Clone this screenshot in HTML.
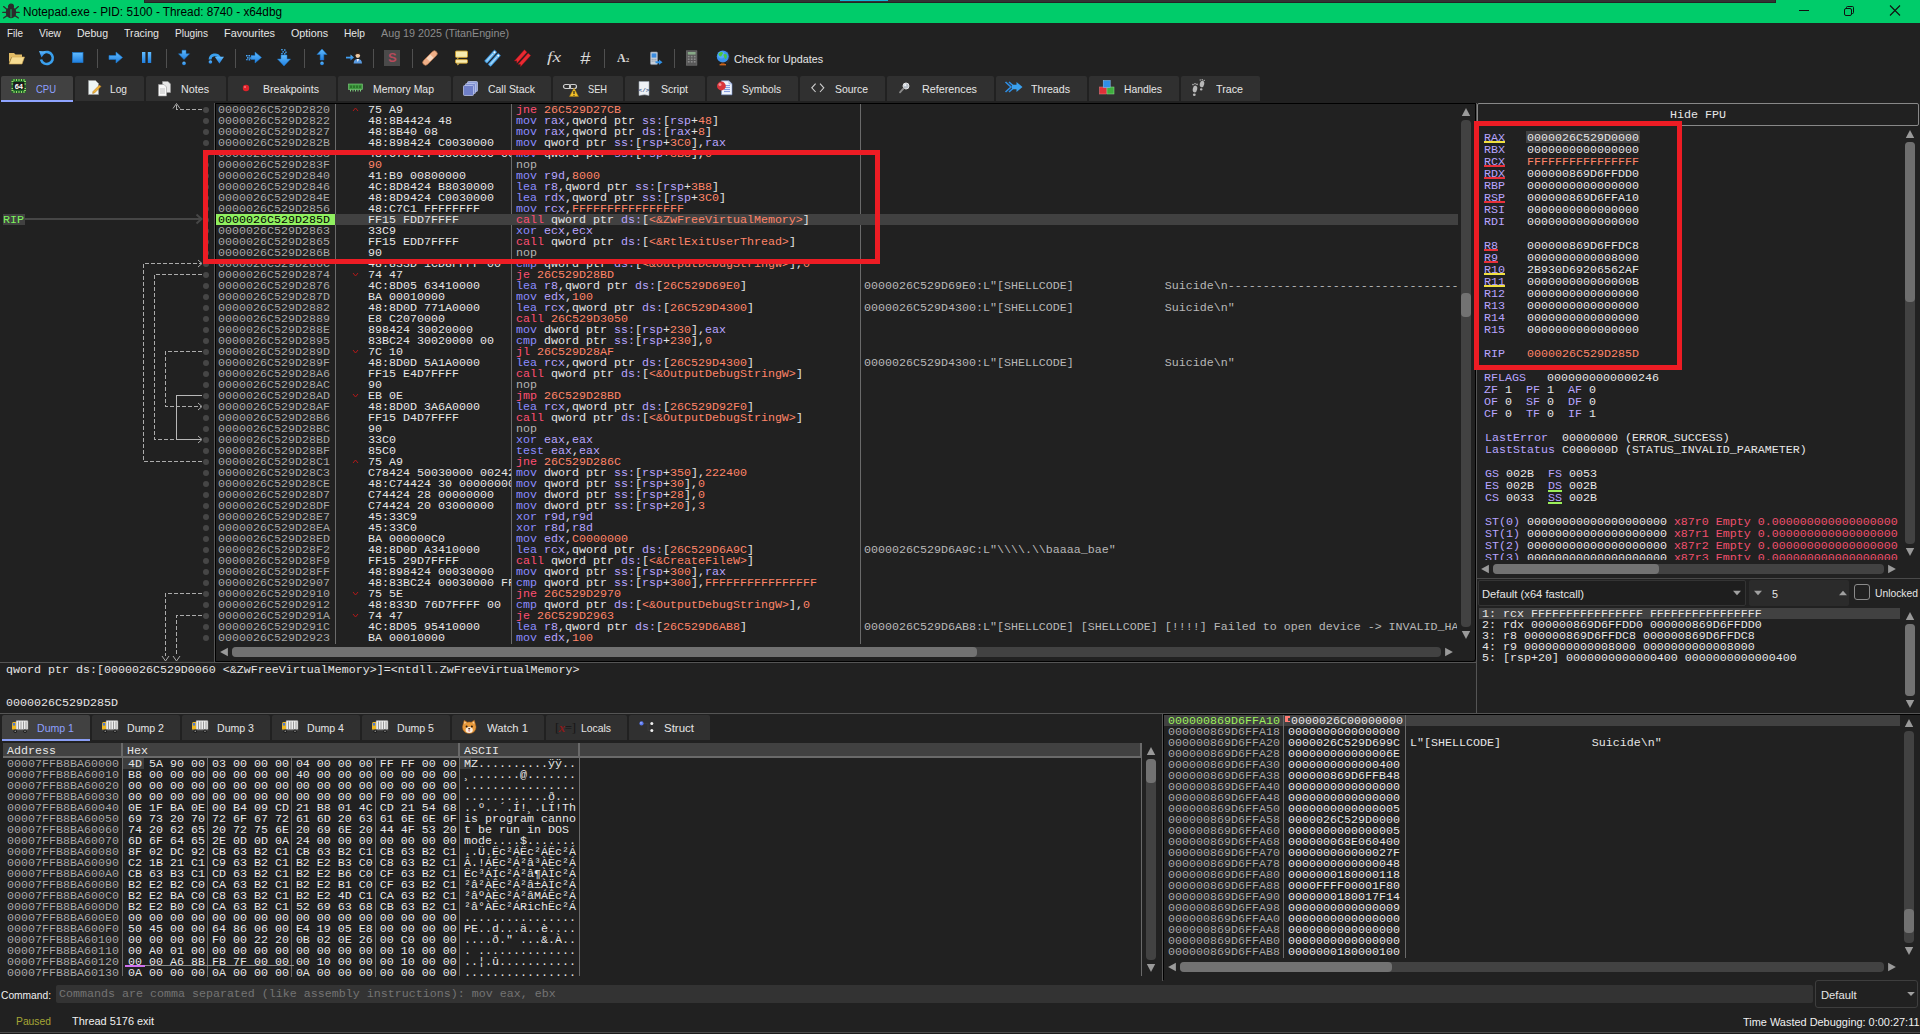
<!DOCTYPE html><html><head><meta charset="utf-8"><title>x64dbg</title><style>html,body{margin:0;padding:0;background:#212121;width:1920px;height:1034px;overflow:hidden}
.b{position:absolute}
.u{position:absolute;font-family:"Liberation Sans",sans-serif;white-space:pre;line-height:16px;height:16px}
.m{position:absolute;font-family:"Liberation Mono",monospace;font-size:11.664px;white-space:pre}
</style></head><body>
<svg width="0" height="0" style="position:absolute"><defs><linearGradient id="gb" x1="0" y1="0" x2="0" y2="1"><stop offset="0" stop-color="#62bcff"/><stop offset="1" stop-color="#1f7fe0"/></linearGradient></defs></svg>
<div class="b" style="left:0px;top:0px;width:1920px;height:23px;background:#00cc6a;"></div>
<div class="b" style="left:144px;top:0px;width:1632px;height:3px;background:#242424;"></div>
<div class="b" style="left:145px;top:0px;width:1630px;height:2px;background:#333333;"></div>
<div class="b" style="left:840px;top:0px;width:48px;height:1px;background:#10b8d8;"></div>
<svg class="b" style="left:2px;top:3px;" width="18" height="16" viewBox="0 0 18 16"><g fill="#2b2b2b" stroke="#2b2b2b" stroke-width="1.3" stroke-linecap="round">
<ellipse cx="9" cy="9.6" rx="4.6" ry="5" /><circle cx="9" cy="3.6" r="2.4"/>
<path d="M5 6.4 L1.6 3.6 M13 6.4 L16.4 3.6 M4.6 9.4 L.8 9.4 M13.4 9.4 L17.2 9.4 M5 12.6 L1.6 15 M13 12.6 L16.4 15" fill="none"/></g><path d="M9 6.2V14.4" stroke="#00cc6a" stroke-width=".9"/></svg>
<div class="u" style="left:23px;top:4px;color:#000;font-size:12px;transform:scaleX(0.9813);transform-origin:0 50%;">Notepad.exe - PID: 5100 - Thread: 8740 - x64dbg</div>
<svg class="b" style="left:1795px;top:4px;" width="20" height="14" viewBox="0 0 20 14"><path d="M4 6.5 H14" stroke="#111" stroke-width="1"/></svg>
<svg class="b" style="left:1840px;top:3px;" width="20" height="16" viewBox="0 0 20 16"><rect x="4.5" y="5.5" width="7" height="7" rx="1.5" fill="none" stroke="#111" stroke-width="1"/><path d="M6.5 5.5 V4.5 Q6.5 3.5 7.5 3.5 H12.5 Q13.5 3.5 13.5 4.5 V9.5 Q13.5 10.5 12.5 10.5 H11.5" fill="none" stroke="#111" stroke-width="1"/></svg>
<svg class="b" style="left:1885px;top:3px;" width="20" height="16" viewBox="0 0 20 16"><path d="M5 2.5 L15 12.5 M15 2.5 L5 12.5" stroke="#111" stroke-width="1.1"/></svg>
<div class="u" style="left:7px;top:25px;color:#e6e6e6;font-size:11px;transform:scaleX(0.9027);transform-origin:0 50%;">File</div>
<div class="u" style="left:39px;top:25px;color:#e6e6e6;font-size:11px;transform:scaleX(0.9305);transform-origin:0 50%;">View</div>
<div class="u" style="left:77px;top:25px;color:#e6e6e6;font-size:11px;transform:scaleX(0.9564);transform-origin:0 50%;">Debug</div>
<div class="u" style="left:124px;top:25px;color:#e6e6e6;font-size:11px;transform:scaleX(0.9650);transform-origin:0 50%;">Tracing</div>
<div class="u" style="left:175px;top:25px;color:#e6e6e6;font-size:11px;transform:scaleX(0.9147);transform-origin:0 50%;">Plugins</div>
<div class="u" style="left:224px;top:25px;color:#e6e6e6;font-size:11px;transform:scaleX(0.9931);transform-origin:0 50%;">Favourites</div>
<div class="u" style="left:291px;top:25px;color:#e6e6e6;font-size:11px;transform:scaleX(0.9760);transform-origin:0 50%;">Options</div>
<div class="u" style="left:344px;top:25px;color:#e6e6e6;font-size:11px;transform:scaleX(0.9283);transform-origin:0 50%;">Help</div>
<div class="u" style="left:381px;top:25px;color:#8c8c8c;font-size:11px;transform:scaleX(0.9766);transform-origin:0 50%;">Aug 19 2025 (TitanEngine)</div>
<div class="b" style="left:97px;top:49px;width:1px;height:19px;background:#505050;"></div>
<div class="b" style="left:166px;top:49px;width:1px;height:19px;background:#505050;"></div>
<div class="b" style="left:235px;top:49px;width:1px;height:19px;background:#505050;"></div>
<div class="b" style="left:304px;top:49px;width:1px;height:19px;background:#505050;"></div>
<div class="b" style="left:373px;top:49px;width:1px;height:19px;background:#505050;"></div>
<div class="b" style="left:412px;top:49px;width:1px;height:19px;background:#505050;"></div>
<div class="b" style="left:604px;top:49px;width:1px;height:19px;background:#505050;"></div>
<div class="b" style="left:674px;top:49px;width:1px;height:19px;background:#505050;"></div>
<svg class="b" style="left:7px;top:49px;" width="20" height="18" viewBox="0 0 20 18"><path d="M2 4 H7 L8.5 5.5 H15 V8 H4.5 L2 14 Z" fill="#e2bc66"/><path d="M4.8 8 H17.5 L15 15 H2.2 Z" fill="#f6dc92" stroke="#d4aa50" stroke-width=".6"/></svg>
<svg class="b" style="left:37px;top:48px;" width="20" height="20" viewBox="0 0 20 20"><path d="M6.2 5.2 A6 6 0 1 1 4 11.5" fill="none" stroke="#3aa0ee" stroke-width="2.6"/><path d="M2 3 L9 3.5 L4.5 9.5 Z" fill="url(#gb)"/></svg>
<svg class="b" style="left:69px;top:49px;" width="18" height="18" viewBox="0 0 18 18"><rect x="3.5" y="3.5" width="10.5" height="10" fill="url(#gb)" stroke="#1a78d0" stroke-width=".7"/></svg>
<svg class="b" style="left:107px;top:49px;" width="18" height="18" viewBox="0 0 18 18"><path d="M2 6.5 H9 V3 L15.5 8.5 L9 14 V10.5 H2 Z" fill="url(#gb)" stroke="#1a78d0" stroke-width=".6"/></svg>
<svg class="b" style="left:139px;top:49px;" width="16" height="18" viewBox="0 0 16 18"><rect x="3" y="3" width="3.4" height="11" fill="url(#gb)"/><rect x="8.8" y="3" width="3.4" height="11" fill="url(#gb)"/></svg>
<svg class="b" style="left:176px;top:47px;" width="16" height="22" viewBox="0 0 16 22"><path d="M6 3.2 H10 V6.8 H13.5 L8 12.6 L2.5 6.8 H6 Z" fill="url(#gb)" stroke="#1a78d0" stroke-width=".5"/><circle cx="8" cy="16.4" r="1.8" fill="url(#gb)"/></svg>
<svg class="b" style="left:205px;top:48px;" width="20" height="20" viewBox="0 0 20 20"><path d="M5 11.5 A5 5 0 0 1 14.4 9.5" fill="none" stroke="#3aa0ee" stroke-width="2.8"/><path d="M9.8 8.8 H19 L14.4 15.4 Z" fill="url(#gb)"/><circle cx="5.4" cy="14" r="1.8" fill="url(#gb)"/></svg>
<svg class="b" style="left:244px;top:49px;" width="20" height="18" viewBox="0 0 20 18"><path d="M7 6.5 H11 V3 L17.5 8.5 L11 14 V10.5 H7 Z" fill="url(#gb)" stroke="#1a78d0" stroke-width=".5"/><g fill="url(#gb)"><rect x="2" y="6" width="1.6" height="1.6"/><rect x="4.4" y="6" width="1.6" height="1.6"/><rect x="3" y="8.2" width="1.6" height="1.6"/><rect x="5.2" y="8.4" width="1.6" height="1.6"/><rect x="2.2" y="10" width="1.4" height="1.4"/><rect x="4.6" y="10.2" width="1.6" height="1.4"/></g></svg>
<svg class="b" style="left:275px;top:47px;" width="18" height="22" viewBox="0 0 18 22"><path d="M6 8 H12 V12 H15.5 L9 19 L2.5 12 H6 Z" fill="url(#gb)" stroke="#1a78d0" stroke-width=".5"/><g fill="url(#gb)"><rect x="6.2" y="2" width="1.5" height="1.5"/><rect x="9" y="2.4" width="1.5" height="1.5"/><rect x="7.4" y="4.2" width="1.5" height="1.5"/><rect x="10.2" y="4.6" width="1.5" height="1.5"/><rect x="6.2" y="6" width="1.5" height="1.5"/><rect x="9" y="6.2" width="1.5" height="1.5"/></g></svg>
<svg class="b" style="left:314px;top:47px;" width="16" height="22" viewBox="0 0 16 22"><path d="M8 2 L13 7.5 H9.8 V13 H6.2 V7.5 H3 Z" fill="url(#gb)" stroke="#1a78d0" stroke-width=".5"/><circle cx="8" cy="16.4" r="1.8" fill="url(#gb)"/></svg>
<svg class="b" style="left:344px;top:49px;" width="20" height="18" viewBox="0 0 20 18"><path d="M2 7.8 H6.5 V5.6 L10 8.6 L6.5 11.6 V9.4 H2 Z" fill="url(#gb)"/><circle cx="13.8" cy="6.6" r="2.3" fill="#ecc9a4"/><path d="M11.4 6 Q11.6 3.4 13.8 3.4 Q16 3.4 16.2 6 Q15 4.8 13.8 5 Q12.6 4.8 11.4 6Z" fill="#3a2414"/><path d="M9.6 14.4 Q9.8 10 13.8 10 Q17.8 10 18 14.4 Z" fill="#5a9ae0"/><path d="M12.6 10 L13.8 13 L15 10Z" fill="#fff"/></svg>
<div class="b" style="left:384px;top:50px;width:16px;height:16px;background:#4a4a4a;"></div>
<div class="b" style="left:387px;top:49px;font:bold 13px 'Liberation Sans',sans-serif;color:#b84a5c;line-height:16px;left:388px;top:50px">S</div>
<svg class="b" style="left:420px;top:48px;" width="20" height="20" viewBox="0 0 20 20"><g transform="rotate(-45 10 10)"><rect x="1" y="7.2" width="18" height="5.6" rx="2.8" fill="#f0b088" stroke="#b87850" stroke-width=".7"/><rect x="7.4" y="7.6" width="5.2" height="4.8" fill="#f8d8c0"/></g></svg>
<svg class="b" style="left:453px;top:48px;" width="18" height="20" viewBox="0 0 18 20"><rect x="2.5" y="3" width="12" height="6.4" rx="1" fill="#f8ecb0" stroke="#c89a28" stroke-width=".9"/><rect x="2.5" y="11.6" width="12" height="3.6" rx="1" fill="#f8ecb0" stroke="#c89a28" stroke-width=".9"/><path d="M4 15.4 L4.6 17.6 L6.6 15.4Z" fill="#e8c860"/><path d="M4 9.6 L4.6 11.2 L6.2 9.6Z" fill="#e8c860"/></svg>
<svg class="b" style="left:483px;top:48px;" width="20" height="20" viewBox="0 0 20 20"><g transform="rotate(-48 10 10)"><rect x="2" y="5.6" width="15" height="3.4" rx=".8" fill="#6cbcf2" stroke="#2a7cc8" stroke-width=".6"/><rect x="2" y="10.6" width="15" height="3.4" rx=".8" fill="#6cbcf2" stroke="#2a7cc8" stroke-width=".6"/><circle cx="15.2" cy="7.3" r=".9" fill="#fff"/><circle cx="15.2" cy="12.3" r=".9" fill="#fff"/><path d="M4 7.3H13M4 12.3H13" stroke="#d8efff" stroke-width=".7"/></g></svg>
<svg class="b" style="left:513px;top:48px;" width="20" height="20" viewBox="0 0 20 20"><g transform="rotate(-48 10 10)"><path d="M2 5.6 H17 V9 H2 L3.8 7.3 Z" fill="#ea2a32" stroke="#b01018" stroke-width=".4"/><path d="M2 10.6 H17 V14 H2 L3.8 12.3 Z" fill="#ea2a32" stroke="#b01018" stroke-width=".4"/></g></svg>
<div class="b" style="left:547px;top:47px;font:italic 15px 'Liberation Serif',serif;color:#d4d4d4;line-height:20px;transform:scaleX(1.3);transform-origin:0 0">fx</div>
<div class="b" style="left:579.5px;top:49px;font:italic 16px 'Liberation Sans',sans-serif;color:#dcdcdc;line-height:20px;transform:scaleX(1.15);transform-origin:0 0">#</div>
<div class="b" style="left:617px;top:50px;font:bold 12px 'Liberation Serif',serif;color:#d8d8d8;line-height:16px;">A<span style="font-size:7px;position:relative;top:0px">2</span></div>
<svg class="b" style="left:647px;top:49px;" width="18" height="18" viewBox="0 0 18 18"><rect x="3.5" y="3" width="7" height="12.6" rx="1" fill="#c8d0da" stroke="#8894a4" stroke-width=".6"/><rect x="4.6" y="4.4" width="4.8" height="4.2" fill="#3a8ce0"/><g fill="#8a96a6"><rect x="4.6" y="9.8" width="1.2" height="1"/><rect x="6.4" y="9.8" width="1.2" height="1"/><rect x="8.2" y="9.8" width="1.2" height="1"/><rect x="4.6" y="11.6" width="1.2" height="1"/><rect x="6.4" y="11.6" width="1.2" height="1"/><rect x="8.2" y="11.6" width="1.2" height="1"/></g><path d="M8.5 12.2 H12 V10.6 L15.5 13.2 L12 15.8 V14.2 H8.5 Z" fill="#2f8fe6"/></svg>
<svg class="b" style="left:685px;top:49px;" width="14" height="18" viewBox="0 0 14 18"><rect x="1.5" y="1.8" width="10.4" height="14.4" fill="#585858" stroke="#7a7a7a" stroke-width=".6"/><rect x="2.8" y="3" width="7.8" height="2.6" fill="#88aa88"/><g fill="#8c8c8c"><rect x="2.8" y="6.8" width="1.8" height="1.6"/><rect x="5.8" y="6.8" width="1.8" height="1.6"/><rect x="8.8" y="6.8" width="1.8" height="1.6"/><rect x="2.8" y="9.4" width="1.8" height="1.6"/><rect x="5.8" y="9.4" width="1.8" height="1.6"/><rect x="8.8" y="9.4" width="1.8" height="1.6"/><rect x="2.8" y="12" width="1.8" height="1.6"/><rect x="5.8" y="12" width="1.8" height="1.6"/><rect x="8.8" y="12" width="1.8" height="1.6"/></g></svg>
<svg class="b" style="left:714px;top:48px;" width="18" height="20" viewBox="0 0 18 20"><path d="M11.5 2.6 A7.4 7.4 0 0 1 12.5 15" fill="none" stroke="#2a2a30" stroke-width="1.6"/><circle cx="8.8" cy="8.6" r="6" fill="#3a94ee"/><circle cx="7.4" cy="7" r="3.4" fill="#6cb8ff" opacity=".55"/><path d="M4.4 6 Q6 3.4 8.6 4.2 Q9.6 5.6 8 6.8 Q7.8 8.4 6.2 8.4 Q4.8 7.6 4.4 6Z M9.6 6.4 Q11.4 5.4 12.8 7 Q13.4 9.6 11.8 11.2 Q10.4 10.6 10.4 9 Q9.2 7.8 9.6 6.4Z" fill="#4cc83c"/><path d="M5.6 16 H12 V17.4 H5.6Z" fill="#c8641e"/><path d="M7 14.8H10.6V16H7Z" fill="#8a4414"/></svg>
<div class="u" style="left:733.5px;top:51px;color:#e6e6e6;font-size:11px;transform:scaleX(0.9770);transform-origin:0 50%;">Check for Updates</div>
<div class="b" style="left:1px;top:76px;width:72px;height:26px;background:#414141;border-radius:2px 2px 0 0;"></div>
<div class="b" style="left:1px;top:100px;width:72px;height:2px;background:#8fa4ff;"></div>
<div class="u" style="left:36px;top:81px;color:#8ea0ff;font-size:11px;transform:scaleX(0.8612);transform-origin:0 50%;">CPU</div>
<div class="b" style="left:75px;top:76px;width:69px;height:25px;background:#303030;border-radius:2px 2px 0 0;"></div>
<div class="u" style="left:110px;top:81px;color:#e6e6e6;font-size:11px;transform:scaleX(0.9263);transform-origin:0 50%;">Log</div>
<div class="b" style="left:146px;top:76px;width:80px;height:25px;background:#303030;border-radius:2px 2px 0 0;"></div>
<div class="u" style="left:181px;top:81px;color:#e6e6e6;font-size:11px;transform:scaleX(0.9744);transform-origin:0 50%;">Notes</div>
<div class="b" style="left:228px;top:76px;width:108px;height:25px;background:#303030;border-radius:2px 2px 0 0;"></div>
<div class="u" style="left:263px;top:81px;color:#e6e6e6;font-size:11px;transform:scaleX(0.9640);transform-origin:0 50%;">Breakpoints</div>
<div class="b" style="left:338px;top:76px;width:113px;height:25px;background:#303030;border-radius:2px 2px 0 0;"></div>
<div class="u" style="left:373px;top:81px;color:#e6e6e6;font-size:11px;transform:scaleX(0.9505);transform-origin:0 50%;">Memory Map</div>
<div class="b" style="left:453px;top:76px;width:98px;height:25px;background:#303030;border-radius:2px 2px 0 0;"></div>
<div class="u" style="left:488px;top:81px;color:#e6e6e6;font-size:11px;transform:scaleX(0.9492);transform-origin:0 50%;">Call Stack</div>
<div class="b" style="left:553px;top:76px;width:70px;height:25px;background:#303030;border-radius:2px 2px 0 0;"></div>
<div class="u" style="left:588px;top:81px;color:#e6e6e6;font-size:11px;transform:scaleX(0.8401);transform-origin:0 50%;">SEH</div>
<div class="b" style="left:625px;top:76px;width:80px;height:25px;background:#303030;border-radius:2px 2px 0 0;"></div>
<div class="u" style="left:661px;top:81px;color:#e6e6e6;font-size:11px;transform:scaleX(0.9603);transform-origin:0 50%;">Script</div>
<div class="b" style="left:707px;top:76px;width:91px;height:25px;background:#303030;border-radius:2px 2px 0 0;"></div>
<div class="u" style="left:742px;top:81px;color:#e6e6e6;font-size:11px;transform:scaleX(0.9246);transform-origin:0 50%;">Symbols</div>
<div class="b" style="left:800px;top:76px;width:85px;height:25px;background:#303030;border-radius:2px 2px 0 0;"></div>
<div class="u" style="left:835px;top:81px;color:#e6e6e6;font-size:11px;transform:scaleX(0.9468);transform-origin:0 50%;">Source</div>
<div class="b" style="left:887px;top:76px;width:107px;height:25px;background:#303030;border-radius:2px 2px 0 0;"></div>
<div class="u" style="left:922px;top:81px;color:#e6e6e6;font-size:11px;transform:scaleX(0.9778);transform-origin:0 50%;">References</div>
<div class="b" style="left:996px;top:76px;width:91px;height:25px;background:#303030;border-radius:2px 2px 0 0;"></div>
<div class="u" style="left:1031px;top:81px;color:#e6e6e6;font-size:11px;transform:scaleX(0.9665);transform-origin:0 50%;">Threads</div>
<div class="b" style="left:1089px;top:76px;width:90px;height:25px;background:#303030;border-radius:2px 2px 0 0;"></div>
<div class="u" style="left:1124px;top:81px;color:#e6e6e6;font-size:11px;transform:scaleX(0.9416);transform-origin:0 50%;">Handles</div>
<div class="b" style="left:1181px;top:76px;width:79px;height:25px;background:#303030;border-radius:2px 2px 0 0;"></div>
<div class="u" style="left:1216px;top:81px;color:#e6e6e6;font-size:11px;transform:scaleX(0.9744);transform-origin:0 50%;">Trace</div>
<svg class="b" style="left:11px;top:78px;" width="16" height="17" viewBox="0 0 16 17"><rect x=".5" y="1" width="14.5" height="14" rx="1" fill="#1f6a2a"/><g stroke="#9ad86a" stroke-width="1"><path d="M3 1V3M5.5 1V3M8 1V3M10.5 1V3M13 1V3M3 13V15M5.5 13V15M8 13V15M10.5 13V15M13 13V15M.5 3.5H2.5M.5 6H2.5M.5 10.5H2.5M.5 12.5H2.5M13 3.5H15M13 6H15M13 10.5H15M13 12.5H15"/></g><rect x="2.2" y="4" width="11.2" height="7.6" fill="#1a1a1a"/><text x="7.8" y="10.6" font-family="Liberation Sans" font-size="7.5" font-weight="bold" fill="#fff" text-anchor="middle">64</text></svg>
<svg class="b" style="left:86px;top:79px;" width="18" height="18" viewBox="0 0 18 18"><path d="M2.5 1.5 H9.5 L12.5 4.5 V15.5 H2.5 Z" fill="#eef6f6" stroke="#9a9a9a" stroke-width=".6"/><path d="M7 12.5 L13.5 6 L15 7.5 L8.5 14 L6.6 14.4Z" fill="#f0b43a" stroke="#a86e1a" stroke-width=".5"/></svg>
<svg class="b" style="left:156px;top:80px;" width="20" height="18" viewBox="0 0 20 18"><path d="M6.5 1.5 H12 L14.5 4 V12.5 H6.5 Z" fill="#e8e8e8" stroke="#9a9a9a" stroke-width=".6"/><path d="M2.5 4.5 H8 L10.5 7 V16 H2.5 Z" fill="#f8f8f8" stroke="#9a9a9a" stroke-width=".6"/><path d="M4 9H9M4 11H9M4 13H9" stroke="#aaa" stroke-width=".7"/></svg>
<svg class="b" style="left:240px;top:82px;" width="12" height="12" viewBox="0 0 12 12"><circle cx="6" cy="6" r="3.2" fill="#e0222a"/><circle cx="5" cy="5" r="1" fill="#f4777c"/></svg>
<svg class="b" style="left:348px;top:83px;" width="16" height="10" viewBox="0 0 16 10"><rect x="0.5" y="1" width="14" height="5.5" fill="#3f9a3f" stroke="#7fd07f" stroke-width=".6"/><path d="M2.5 6.5V8.5M5 6.5V8.5M7.5 6.5V8.5M10 6.5V8.5M12.5 6.5V8.5" stroke="#7fd07f" stroke-width="1"/><path d="M3 2.5V5M6 2.5V5M9 2.5V5M12 2.5V5" stroke="#1f5f1f" stroke-width="1.2"/></svg>
<svg class="b" style="left:462px;top:80px;" width="18" height="18" viewBox="0 0 18 18"><rect x="5.5" y="1.5" width="10" height="10" rx="1" fill="#8f9fd8" stroke="#c6cef0" stroke-width=".7"/><rect x="3.5" y="3.5" width="10" height="10" rx="1" fill="#7f8fd0" stroke="#c6cef0" stroke-width=".7"/><rect x="1.5" y="5.5" width="10" height="10" rx="1" fill="#6f7fc8" stroke="#c6cef0" stroke-width=".7"/></svg>
<svg class="b" style="left:562px;top:81px;" width="20" height="18" viewBox="0 0 20 18"><rect x="1.5" y="3.5" width="7" height="4" rx="2" fill="none" stroke="#d0d0d0" stroke-width="1.2"/><rect x="7.5" y="3.5" width="7" height="4" rx="2" fill="none" stroke="#d0d0d0" stroke-width="1.2"/><path d="M12 7 L16.5 15.5 H7.5 Z" fill="#f2c02a" stroke="#a07a10" stroke-width=".5"/><path d="M12 10V13" stroke="#222" stroke-width="1.2"/><circle cx="12" cy="14.3" r=".6" fill="#222"/></svg>
<svg class="b" style="left:637px;top:80px;" width="16" height="18" viewBox="0 0 16 18"><path d="M2 1.5 H12 V15.5 Q8 14 2 15.5 Z" fill="#eef2f6" stroke="#9aa4b0" stroke-width=".6"/><text x="7" y="11.5" font-family="Liberation Mono" font-size="6" fill="#3a5a8a" text-anchor="middle" font-weight="bold">&lt;/&gt;</text></svg>
<svg class="b" style="left:716px;top:79px;" width="20" height="18" viewBox="0 0 20 18"><path d="M5.5 1.8 H13 L16 4.8 V15.8 H5.5 Z" fill="#f0f4fc" stroke="#7a94d0" stroke-width=".6"/><path d="M8 6.6H14M8 8.6H14M8 10.6H14M8 12.6H14" stroke="#5a7ad8" stroke-width=".8"/><path d="M13 1.8 V4.8 H16" fill="none" stroke="#7a94d0" stroke-width=".6"/><circle cx="5.4" cy="7" r="4.4" fill="#d8343c"/><circle cx="4" cy="5.4" r="1.5" fill="#f29094"/></svg>
<svg class="b" style="left:810px;top:82px;" width="18" height="14" viewBox="0 0 18 14"><path d="M5.6 1.6 L1.8 5.8 L5.6 10 M10 1.6 L13.8 5.8 L10 10" fill="none" stroke="#d0d0d0" stroke-width="1.1"/></svg>
<svg class="b" style="left:896px;top:81px;" width="18" height="16" viewBox="0 0 18 16"><circle cx="10" cy="5" r="3" fill="#b8c0c8" stroke="#e4e4e4" stroke-width="1"/><circle cx="9.2" cy="4.2" r="1.1" fill="#eef2f6"/><path d="M7.6 7.4 L4 11.4" stroke="#8a8a8a" stroke-width="1.8" stroke-linecap="round"/></svg>
<svg class="b" style="left:1004px;top:80px;" width="20" height="16" viewBox="0 0 20 16"><path d="M1.5 2 L7 7 L1.5 12 M5 2 L10.5 7 L5 12" fill="none" stroke="#2f8fe6" stroke-width="1.6"/><path d="M8 4.8 H12.5 V2 L18.5 7 L12.5 12 V9.2 H8 Z" fill="#3aa0ee"/></svg>
<svg class="b" style="left:1098px;top:79px;" width="18" height="18" viewBox="0 0 18 18"><rect x="1.5" y="8" width="7" height="7" fill="#e03038" stroke="#f07a80" stroke-width=".5"/><rect x="9" y="8" width="7" height="7" fill="#3fae3f" stroke="#8fe08f" stroke-width=".5"/><rect x="5.2" y="1.5" width="7" height="7" fill="#2f8fe6" stroke="#8cc4f4" stroke-width=".5"/></svg>
<svg class="b" style="left:1190px;top:79px;" width="18" height="20" viewBox="0 0 18 20"><ellipse cx="5" cy="10" rx="2.2" ry="3.4" fill="#b8b8b8" transform="rotate(12 5 10)"/><ellipse cx="4.3" cy="15.8" rx="1.4" ry="1.2" fill="#b8b8b8"/><ellipse cx="12" cy="5" rx="2.2" ry="3.2" fill="#b8b8b8" transform="rotate(12 12 5)"/><ellipse cx="11.2" cy="10.4" rx="1.3" ry="1.1" fill="#b8b8b8"/><circle cx="3" cy="5.6" r=".8" fill="#b8b8b8"/><circle cx="5" cy="4.8" r=".8" fill="#b8b8b8"/><circle cx="7" cy="5.4" r=".8" fill="#b8b8b8"/><circle cx="10.2" cy="1" r=".7" fill="#b8b8b8"/><circle cx="12.2" cy=".7" r=".7" fill="#b8b8b8"/><circle cx="14.2" cy="1.4" r=".7" fill="#b8b8b8"/></svg>
<div class="b" style="left:214px;top:103px;width:1px;height:560px;background:#555;"></div>
<div class="b" style="left:0px;top:662px;width:1477px;height:1px;background:#555;"></div>
<div class="b" style="left:1476px;top:103px;width:1px;height:610px;background:#555;"></div>
<div class="b" style="left:215px;top:103px;width:1261px;height:559px;border:1px solid #000;border-radius:0 0 3px 0;box-sizing:border-box"></div>
<div class="b" style="left:335px;top:104px;width:1px;height:540px;background:#6a6a6a;"></div>
<div class="b" style="left:511px;top:104px;width:1px;height:540px;background:#6a6a6a;"></div>
<div class="b" style="left:860px;top:104px;width:1px;height:540px;background:#6a6a6a;"></div>
<div class="b" style="left:216px;top:214.0px;width:1242px;height:11px;background:#414141;"></div>
<div class="b" style="left:203.2px;top:106.5px;width:6px;height:6px;border-radius:50%;background:#464646"></div>
<div class="m" style="left:218px;top:104.5px;line-height:11px;height:11px;color:#a8a8a8;">0000026C529D2820</div>
<svg class="b" style="left:352px;top:106.0px;" width="7" height="8" viewBox="0 0 7 8"><path d="M1 5 L3.5 2 L6 5" fill="none" stroke="#b41818" stroke-width="1"/></svg>
<div class="m" style="left:368px;top:104.5px;line-height:11px;height:11px;color:#e6e6e6;width:143px;overflow:hidden;">75 A9</div>
<div class="m" style="left:516px;top:104.5px;line-height:11px;height:11px;color:#e4e4e4;width:344px;overflow:hidden;"><span style="color:#ff4f73">jne</span> <span style="color:#ff8468">26C529D27CB</span></div>
<div class="b" style="left:203.2px;top:117.5px;width:6px;height:6px;border-radius:50%;background:#464646"></div>
<div class="m" style="left:218px;top:115.5px;line-height:11px;height:11px;color:#a8a8a8;">0000026C529D2822</div>
<div class="m" style="left:368px;top:115.5px;line-height:11px;height:11px;color:#e6e6e6;width:143px;overflow:hidden;">48:8B4424 48</div>
<div class="m" style="left:516px;top:115.5px;line-height:11px;height:11px;color:#e4e4e4;width:344px;overflow:hidden;"><span style="color:#8c8cff">mov</span> <span style="color:#b8a5ff">rax</span><span style="color:#e4e4e4">,</span><span style="color:#e4e4e4">qword</span><span style="color:#e4e4e4"> </span><span style="color:#e4e4e4">ptr</span><span style="color:#e4e4e4"> </span><span style="color:#b8a5ff">ss</span><span style="color:#b8a5ff">:</span><span style="color:#e4e4e4">[</span><span style="color:#b8a5ff">rsp</span><span style="color:#e4e4e4">+</span><span style="color:#ff8468">48</span><span style="color:#e4e4e4">]</span></div>
<div class="b" style="left:203.2px;top:128.5px;width:6px;height:6px;border-radius:50%;background:#464646"></div>
<div class="m" style="left:218px;top:126.5px;line-height:11px;height:11px;color:#a8a8a8;">0000026C529D2827</div>
<div class="m" style="left:368px;top:126.5px;line-height:11px;height:11px;color:#e6e6e6;width:143px;overflow:hidden;">48:8B40 08</div>
<div class="m" style="left:516px;top:126.5px;line-height:11px;height:11px;color:#e4e4e4;width:344px;overflow:hidden;"><span style="color:#8c8cff">mov</span> <span style="color:#b8a5ff">rax</span><span style="color:#e4e4e4">,</span><span style="color:#e4e4e4">qword</span><span style="color:#e4e4e4"> </span><span style="color:#e4e4e4">ptr</span><span style="color:#e4e4e4"> </span><span style="color:#b8a5ff">ds</span><span style="color:#b8a5ff">:</span><span style="color:#e4e4e4">[</span><span style="color:#b8a5ff">rax</span><span style="color:#e4e4e4">+</span><span style="color:#ff8468">8</span><span style="color:#e4e4e4">]</span></div>
<div class="b" style="left:203.2px;top:139.5px;width:6px;height:6px;border-radius:50%;background:#464646"></div>
<div class="m" style="left:218px;top:137.5px;line-height:11px;height:11px;color:#a8a8a8;">0000026C529D282B</div>
<div class="m" style="left:368px;top:137.5px;line-height:11px;height:11px;color:#e6e6e6;width:143px;overflow:hidden;">48:898424 C0030000</div>
<div class="m" style="left:516px;top:137.5px;line-height:11px;height:11px;color:#e4e4e4;width:344px;overflow:hidden;"><span style="color:#8c8cff">mov</span> <span style="color:#e4e4e4">qword</span><span style="color:#e4e4e4"> </span><span style="color:#e4e4e4">ptr</span><span style="color:#e4e4e4"> </span><span style="color:#b8a5ff">ss</span><span style="color:#b8a5ff">:</span><span style="color:#e4e4e4">[</span><span style="color:#b8a5ff">rsp</span><span style="color:#e4e4e4">+</span><span style="color:#ff8468">3C0</span><span style="color:#e4e4e4">]</span><span style="color:#e4e4e4">,</span><span style="color:#b8a5ff">rax</span></div>
<div class="b" style="left:203.2px;top:150.5px;width:6px;height:6px;border-radius:50%;background:#464646"></div>
<div class="m" style="left:218px;top:148.5px;line-height:11px;height:11px;color:#a8a8a8;">0000026C529D2833</div>
<div class="m" style="left:368px;top:148.5px;line-height:11px;height:11px;color:#e6e6e6;width:143px;overflow:hidden;">48:C78424 B8030000 00000000</div>
<div class="m" style="left:516px;top:148.5px;line-height:11px;height:11px;color:#e4e4e4;width:344px;overflow:hidden;"><span style="color:#8c8cff">mov</span> <span style="color:#e4e4e4">qword</span><span style="color:#e4e4e4"> </span><span style="color:#e4e4e4">ptr</span><span style="color:#e4e4e4"> </span><span style="color:#b8a5ff">ss</span><span style="color:#b8a5ff">:</span><span style="color:#e4e4e4">[</span><span style="color:#b8a5ff">rsp</span><span style="color:#e4e4e4">+</span><span style="color:#ff8468">3B8</span><span style="color:#e4e4e4">]</span><span style="color:#e4e4e4">,</span><span style="color:#ff8468">0</span></div>
<div class="b" style="left:203.2px;top:161.5px;width:6px;height:6px;border-radius:50%;background:#464646"></div>
<div class="m" style="left:218px;top:159.5px;line-height:11px;height:11px;color:#a8a8a8;">0000026C529D283F</div>
<div class="m" style="left:368px;top:159.5px;line-height:11px;height:11px;color:#ff8468;width:143px;overflow:hidden;">90</div>
<div class="m" style="left:516px;top:159.5px;line-height:11px;height:11px;color:#e4e4e4;width:344px;overflow:hidden;"><span style="color:#b4b4b4">nop</span></div>
<div class="b" style="left:203.2px;top:172.5px;width:6px;height:6px;border-radius:50%;background:#464646"></div>
<div class="m" style="left:218px;top:170.5px;line-height:11px;height:11px;color:#a8a8a8;">0000026C529D2840</div>
<div class="m" style="left:368px;top:170.5px;line-height:11px;height:11px;color:#e6e6e6;width:143px;overflow:hidden;">41:B9 00800000</div>
<div class="m" style="left:516px;top:170.5px;line-height:11px;height:11px;color:#e4e4e4;width:344px;overflow:hidden;"><span style="color:#8c8cff">mov</span> <span style="color:#b8a5ff">r9d</span><span style="color:#e4e4e4">,</span><span style="color:#ff8468">8000</span></div>
<div class="b" style="left:203.2px;top:183.5px;width:6px;height:6px;border-radius:50%;background:#464646"></div>
<div class="m" style="left:218px;top:181.5px;line-height:11px;height:11px;color:#a8a8a8;">0000026C529D2846</div>
<div class="m" style="left:368px;top:181.5px;line-height:11px;height:11px;color:#e6e6e6;width:143px;overflow:hidden;">4C:8D8424 B8030000</div>
<div class="m" style="left:516px;top:181.5px;line-height:11px;height:11px;color:#e4e4e4;width:344px;overflow:hidden;"><span style="color:#8c8cff">lea</span> <span style="color:#b8a5ff">r8</span><span style="color:#e4e4e4">,</span><span style="color:#e4e4e4">qword</span><span style="color:#e4e4e4"> </span><span style="color:#e4e4e4">ptr</span><span style="color:#e4e4e4"> </span><span style="color:#b8a5ff">ss</span><span style="color:#b8a5ff">:</span><span style="color:#e4e4e4">[</span><span style="color:#b8a5ff">rsp</span><span style="color:#e4e4e4">+</span><span style="color:#ff8468">3B8</span><span style="color:#e4e4e4">]</span></div>
<div class="b" style="left:203.2px;top:194.5px;width:6px;height:6px;border-radius:50%;background:#464646"></div>
<div class="m" style="left:218px;top:192.5px;line-height:11px;height:11px;color:#a8a8a8;">0000026C529D284E</div>
<div class="m" style="left:368px;top:192.5px;line-height:11px;height:11px;color:#e6e6e6;width:143px;overflow:hidden;">48:8D9424 C0030000</div>
<div class="m" style="left:516px;top:192.5px;line-height:11px;height:11px;color:#e4e4e4;width:344px;overflow:hidden;"><span style="color:#8c8cff">lea</span> <span style="color:#b8a5ff">rdx</span><span style="color:#e4e4e4">,</span><span style="color:#e4e4e4">qword</span><span style="color:#e4e4e4"> </span><span style="color:#e4e4e4">ptr</span><span style="color:#e4e4e4"> </span><span style="color:#b8a5ff">ss</span><span style="color:#b8a5ff">:</span><span style="color:#e4e4e4">[</span><span style="color:#b8a5ff">rsp</span><span style="color:#e4e4e4">+</span><span style="color:#ff8468">3C0</span><span style="color:#e4e4e4">]</span></div>
<div class="b" style="left:203.2px;top:205.5px;width:6px;height:6px;border-radius:50%;background:#464646"></div>
<div class="m" style="left:218px;top:203.5px;line-height:11px;height:11px;color:#a8a8a8;">0000026C529D2856</div>
<div class="m" style="left:368px;top:203.5px;line-height:11px;height:11px;color:#e6e6e6;width:143px;overflow:hidden;">48:C7C1 FFFFFFFF</div>
<div class="m" style="left:516px;top:203.5px;line-height:11px;height:11px;color:#e4e4e4;width:344px;overflow:hidden;"><span style="color:#8c8cff">mov</span> <span style="color:#b8a5ff">rcx</span><span style="color:#e4e4e4">,</span><span style="color:#ff8468">FFFFFFFFFFFFFFFF</span></div>
<div class="b" style="left:203.2px;top:216.5px;width:6px;height:6px;border-radius:50%;background:#464646"></div>
<div class="b" style="left:216px;top:214.0px;width:119px;height:11px;background:#90f060;"></div>
<div class="m" style="left:218px;top:214.5px;line-height:11px;height:11px;color:#000;">0000026C529D285D</div>
<div class="m" style="left:368px;top:214.5px;line-height:11px;height:11px;color:#e6e6e6;width:143px;overflow:hidden;">FF15 FDD7FFFF</div>
<div class="m" style="left:516px;top:214.5px;line-height:11px;height:11px;color:#e4e4e4;width:344px;overflow:hidden;"><span style="color:#ff4f73">call</span> <span style="color:#e4e4e4">qword</span><span style="color:#e4e4e4"> </span><span style="color:#e4e4e4">ptr</span><span style="color:#e4e4e4"> </span><span style="color:#b8a5ff">ds</span><span style="color:#b8a5ff">:</span><span style="color:#e4e4e4">[</span><span style="color:#ff8468">&lt;&amp;ZwFreeVirtualMemory&gt;</span><span style="color:#e4e4e4">]</span></div>
<div class="b" style="left:203.2px;top:227.5px;width:6px;height:6px;border-radius:50%;background:#464646"></div>
<div class="m" style="left:218px;top:225.5px;line-height:11px;height:11px;color:#a8a8a8;">0000026C529D2863</div>
<div class="m" style="left:368px;top:225.5px;line-height:11px;height:11px;color:#e6e6e6;width:143px;overflow:hidden;">33C9</div>
<div class="m" style="left:516px;top:225.5px;line-height:11px;height:11px;color:#e4e4e4;width:344px;overflow:hidden;"><span style="color:#8c8cff">xor</span> <span style="color:#b8a5ff">ecx</span><span style="color:#e4e4e4">,</span><span style="color:#b8a5ff">ecx</span></div>
<div class="b" style="left:203.2px;top:238.5px;width:6px;height:6px;border-radius:50%;background:#464646"></div>
<div class="m" style="left:218px;top:236.5px;line-height:11px;height:11px;color:#a8a8a8;">0000026C529D2865</div>
<div class="m" style="left:368px;top:236.5px;line-height:11px;height:11px;color:#e6e6e6;width:143px;overflow:hidden;">FF15 EDD7FFFF</div>
<div class="m" style="left:516px;top:236.5px;line-height:11px;height:11px;color:#e4e4e4;width:344px;overflow:hidden;"><span style="color:#ff4f73">call</span> <span style="color:#e4e4e4">qword</span><span style="color:#e4e4e4"> </span><span style="color:#e4e4e4">ptr</span><span style="color:#e4e4e4"> </span><span style="color:#b8a5ff">ds</span><span style="color:#b8a5ff">:</span><span style="color:#e4e4e4">[</span><span style="color:#ff8468">&lt;&amp;RtlExitUserThread&gt;</span><span style="color:#e4e4e4">]</span></div>
<div class="b" style="left:203.2px;top:249.5px;width:6px;height:6px;border-radius:50%;background:#464646"></div>
<div class="m" style="left:218px;top:247.5px;line-height:11px;height:11px;color:#a8a8a8;">0000026C529D286B</div>
<div class="m" style="left:368px;top:247.5px;line-height:11px;height:11px;color:#e6e6e6;width:143px;overflow:hidden;">90</div>
<div class="m" style="left:516px;top:247.5px;line-height:11px;height:11px;color:#e4e4e4;width:344px;overflow:hidden;"><span style="color:#b4b4b4">nop</span></div>
<div class="b" style="left:203.2px;top:260.5px;width:6px;height:6px;border-radius:50%;background:#464646"></div>
<div class="m" style="left:218px;top:258.5px;line-height:11px;height:11px;color:#a8a8a8;">0000026C529D286C</div>
<div class="m" style="left:368px;top:258.5px;line-height:11px;height:11px;color:#e6e6e6;width:143px;overflow:hidden;">48:833D 1CD8FFFF 00</div>
<div class="m" style="left:516px;top:258.5px;line-height:11px;height:11px;color:#e4e4e4;width:344px;overflow:hidden;"><span style="color:#8c8cff">cmp</span> <span style="color:#e4e4e4">qword</span><span style="color:#e4e4e4"> </span><span style="color:#e4e4e4">ptr</span><span style="color:#e4e4e4"> </span><span style="color:#b8a5ff">ds</span><span style="color:#b8a5ff">:</span><span style="color:#e4e4e4">[</span><span style="color:#ff8468">&lt;&amp;OutputDebugStringW&gt;</span><span style="color:#e4e4e4">]</span><span style="color:#e4e4e4">,</span><span style="color:#ff8468">0</span></div>
<div class="b" style="left:203.2px;top:271.5px;width:6px;height:6px;border-radius:50%;background:#464646"></div>
<div class="m" style="left:218px;top:269.5px;line-height:11px;height:11px;color:#a8a8a8;">0000026C529D2874</div>
<svg class="b" style="left:352px;top:271.0px;" width="7" height="8" viewBox="0 0 7 8"><path d="M1 2 L3.5 5 L6 2" fill="none" stroke="#b41818" stroke-width="1"/></svg>
<div class="m" style="left:368px;top:269.5px;line-height:11px;height:11px;color:#e6e6e6;width:143px;overflow:hidden;">74 47</div>
<div class="m" style="left:516px;top:269.5px;line-height:11px;height:11px;color:#e4e4e4;width:344px;overflow:hidden;"><span style="color:#ff4f73">je</span> <span style="color:#ff8468">26C529D28BD</span></div>
<div class="b" style="left:203.2px;top:282.5px;width:6px;height:6px;border-radius:50%;background:#464646"></div>
<div class="m" style="left:218px;top:280.5px;line-height:11px;height:11px;color:#a8a8a8;">0000026C529D2876</div>
<div class="m" style="left:368px;top:280.5px;line-height:11px;height:11px;color:#e6e6e6;width:143px;overflow:hidden;">4C:8D05 63410000</div>
<div class="m" style="left:516px;top:280.5px;line-height:11px;height:11px;color:#e4e4e4;width:344px;overflow:hidden;"><span style="color:#8c8cff">lea</span> <span style="color:#b8a5ff">r8</span><span style="color:#e4e4e4">,</span><span style="color:#e4e4e4">qword</span><span style="color:#e4e4e4"> </span><span style="color:#e4e4e4">ptr</span><span style="color:#e4e4e4"> </span><span style="color:#b8a5ff">ds</span><span style="color:#b8a5ff">:</span><span style="color:#e4e4e4">[</span><span style="color:#ff8468">26C529D69E0</span><span style="color:#e4e4e4">]</span></div>
<div class="m" style="left:864px;top:280.5px;line-height:11px;height:11px;color:#b8b8b8;width:593px;overflow:hidden;">0000026C529D69E0:L"[SHELLCODE]             Suicide\n------------------------------------------</div>
<div class="b" style="left:203.2px;top:293.5px;width:6px;height:6px;border-radius:50%;background:#464646"></div>
<div class="m" style="left:218px;top:291.5px;line-height:11px;height:11px;color:#a8a8a8;">0000026C529D287D</div>
<div class="m" style="left:368px;top:291.5px;line-height:11px;height:11px;color:#e6e6e6;width:143px;overflow:hidden;">BA 00010000</div>
<div class="m" style="left:516px;top:291.5px;line-height:11px;height:11px;color:#e4e4e4;width:344px;overflow:hidden;"><span style="color:#8c8cff">mov</span> <span style="color:#b8a5ff">edx</span><span style="color:#e4e4e4">,</span><span style="color:#ff8468">100</span></div>
<div class="b" style="left:203.2px;top:304.5px;width:6px;height:6px;border-radius:50%;background:#464646"></div>
<div class="m" style="left:218px;top:302.5px;line-height:11px;height:11px;color:#a8a8a8;">0000026C529D2882</div>
<div class="m" style="left:368px;top:302.5px;line-height:11px;height:11px;color:#e6e6e6;width:143px;overflow:hidden;">48:8D0D 771A0000</div>
<div class="m" style="left:516px;top:302.5px;line-height:11px;height:11px;color:#e4e4e4;width:344px;overflow:hidden;"><span style="color:#8c8cff">lea</span> <span style="color:#b8a5ff">rcx</span><span style="color:#e4e4e4">,</span><span style="color:#e4e4e4">qword</span><span style="color:#e4e4e4"> </span><span style="color:#e4e4e4">ptr</span><span style="color:#e4e4e4"> </span><span style="color:#b8a5ff">ds</span><span style="color:#b8a5ff">:</span><span style="color:#e4e4e4">[</span><span style="color:#ff8468">26C529D4300</span><span style="color:#e4e4e4">]</span></div>
<div class="m" style="left:864px;top:302.5px;line-height:11px;height:11px;color:#b8b8b8;width:593px;overflow:hidden;">0000026C529D4300:L"[SHELLCODE]             Suicide\n"</div>
<div class="b" style="left:203.2px;top:315.5px;width:6px;height:6px;border-radius:50%;background:#464646"></div>
<div class="m" style="left:218px;top:313.5px;line-height:11px;height:11px;color:#a8a8a8;">0000026C529D2889</div>
<div class="m" style="left:368px;top:313.5px;line-height:11px;height:11px;color:#e6e6e6;width:143px;overflow:hidden;">E8 C2070000</div>
<div class="m" style="left:516px;top:313.5px;line-height:11px;height:11px;color:#e4e4e4;width:344px;overflow:hidden;"><span style="color:#ff4f73">call</span> <span style="color:#ff8468">26C529D3050</span></div>
<div class="b" style="left:203.2px;top:326.5px;width:6px;height:6px;border-radius:50%;background:#464646"></div>
<div class="m" style="left:218px;top:324.5px;line-height:11px;height:11px;color:#a8a8a8;">0000026C529D288E</div>
<div class="m" style="left:368px;top:324.5px;line-height:11px;height:11px;color:#e6e6e6;width:143px;overflow:hidden;">898424 30020000</div>
<div class="m" style="left:516px;top:324.5px;line-height:11px;height:11px;color:#e4e4e4;width:344px;overflow:hidden;"><span style="color:#8c8cff">mov</span> <span style="color:#e4e4e4">dword</span><span style="color:#e4e4e4"> </span><span style="color:#e4e4e4">ptr</span><span style="color:#e4e4e4"> </span><span style="color:#b8a5ff">ss</span><span style="color:#b8a5ff">:</span><span style="color:#e4e4e4">[</span><span style="color:#b8a5ff">rsp</span><span style="color:#e4e4e4">+</span><span style="color:#ff8468">230</span><span style="color:#e4e4e4">]</span><span style="color:#e4e4e4">,</span><span style="color:#b8a5ff">eax</span></div>
<div class="b" style="left:203.2px;top:337.5px;width:6px;height:6px;border-radius:50%;background:#464646"></div>
<div class="m" style="left:218px;top:335.5px;line-height:11px;height:11px;color:#a8a8a8;">0000026C529D2895</div>
<div class="m" style="left:368px;top:335.5px;line-height:11px;height:11px;color:#e6e6e6;width:143px;overflow:hidden;">83BC24 30020000 00</div>
<div class="m" style="left:516px;top:335.5px;line-height:11px;height:11px;color:#e4e4e4;width:344px;overflow:hidden;"><span style="color:#8c8cff">cmp</span> <span style="color:#e4e4e4">dword</span><span style="color:#e4e4e4"> </span><span style="color:#e4e4e4">ptr</span><span style="color:#e4e4e4"> </span><span style="color:#b8a5ff">ss</span><span style="color:#b8a5ff">:</span><span style="color:#e4e4e4">[</span><span style="color:#b8a5ff">rsp</span><span style="color:#e4e4e4">+</span><span style="color:#ff8468">230</span><span style="color:#e4e4e4">]</span><span style="color:#e4e4e4">,</span><span style="color:#ff8468">0</span></div>
<div class="b" style="left:203.2px;top:348.5px;width:6px;height:6px;border-radius:50%;background:#464646"></div>
<div class="m" style="left:218px;top:346.5px;line-height:11px;height:11px;color:#a8a8a8;">0000026C529D289D</div>
<svg class="b" style="left:352px;top:348.0px;" width="7" height="8" viewBox="0 0 7 8"><path d="M1 2 L3.5 5 L6 2" fill="none" stroke="#b41818" stroke-width="1"/></svg>
<div class="m" style="left:368px;top:346.5px;line-height:11px;height:11px;color:#e6e6e6;width:143px;overflow:hidden;">7C 10</div>
<div class="m" style="left:516px;top:346.5px;line-height:11px;height:11px;color:#e4e4e4;width:344px;overflow:hidden;"><span style="color:#ff4f73">jl</span> <span style="color:#ff8468">26C529D28AF</span></div>
<div class="b" style="left:203.2px;top:359.5px;width:6px;height:6px;border-radius:50%;background:#464646"></div>
<div class="m" style="left:218px;top:357.5px;line-height:11px;height:11px;color:#a8a8a8;">0000026C529D289F</div>
<div class="m" style="left:368px;top:357.5px;line-height:11px;height:11px;color:#e6e6e6;width:143px;overflow:hidden;">48:8D0D 5A1A0000</div>
<div class="m" style="left:516px;top:357.5px;line-height:11px;height:11px;color:#e4e4e4;width:344px;overflow:hidden;"><span style="color:#8c8cff">lea</span> <span style="color:#b8a5ff">rcx</span><span style="color:#e4e4e4">,</span><span style="color:#e4e4e4">qword</span><span style="color:#e4e4e4"> </span><span style="color:#e4e4e4">ptr</span><span style="color:#e4e4e4"> </span><span style="color:#b8a5ff">ds</span><span style="color:#b8a5ff">:</span><span style="color:#e4e4e4">[</span><span style="color:#ff8468">26C529D4300</span><span style="color:#e4e4e4">]</span></div>
<div class="m" style="left:864px;top:357.5px;line-height:11px;height:11px;color:#b8b8b8;width:593px;overflow:hidden;">0000026C529D4300:L"[SHELLCODE]             Suicide\n"</div>
<div class="b" style="left:203.2px;top:370.5px;width:6px;height:6px;border-radius:50%;background:#464646"></div>
<div class="m" style="left:218px;top:368.5px;line-height:11px;height:11px;color:#a8a8a8;">0000026C529D28A6</div>
<div class="m" style="left:368px;top:368.5px;line-height:11px;height:11px;color:#e6e6e6;width:143px;overflow:hidden;">FF15 E4D7FFFF</div>
<div class="m" style="left:516px;top:368.5px;line-height:11px;height:11px;color:#e4e4e4;width:344px;overflow:hidden;"><span style="color:#ff4f73">call</span> <span style="color:#e4e4e4">qword</span><span style="color:#e4e4e4"> </span><span style="color:#e4e4e4">ptr</span><span style="color:#e4e4e4"> </span><span style="color:#b8a5ff">ds</span><span style="color:#b8a5ff">:</span><span style="color:#e4e4e4">[</span><span style="color:#ff8468">&lt;&amp;OutputDebugStringW&gt;</span><span style="color:#e4e4e4">]</span></div>
<div class="b" style="left:203.2px;top:381.5px;width:6px;height:6px;border-radius:50%;background:#464646"></div>
<div class="m" style="left:218px;top:379.5px;line-height:11px;height:11px;color:#a8a8a8;">0000026C529D28AC</div>
<div class="m" style="left:368px;top:379.5px;line-height:11px;height:11px;color:#e6e6e6;width:143px;overflow:hidden;">90</div>
<div class="m" style="left:516px;top:379.5px;line-height:11px;height:11px;color:#e4e4e4;width:344px;overflow:hidden;"><span style="color:#b4b4b4">nop</span></div>
<div class="b" style="left:203.2px;top:392.5px;width:6px;height:6px;border-radius:50%;background:#464646"></div>
<div class="m" style="left:218px;top:390.5px;line-height:11px;height:11px;color:#a8a8a8;">0000026C529D28AD</div>
<svg class="b" style="left:352px;top:392.0px;" width="7" height="8" viewBox="0 0 7 8"><path d="M1 2 L3.5 5 L6 2" fill="none" stroke="#b41818" stroke-width="1"/></svg>
<div class="m" style="left:368px;top:390.5px;line-height:11px;height:11px;color:#e6e6e6;width:143px;overflow:hidden;">EB 0E</div>
<div class="m" style="left:516px;top:390.5px;line-height:11px;height:11px;color:#e4e4e4;width:344px;overflow:hidden;"><span style="color:#ff4f73">jmp</span> <span style="color:#ff8468">26C529D28BD</span></div>
<div class="b" style="left:203.2px;top:403.5px;width:6px;height:6px;border-radius:50%;background:#464646"></div>
<div class="m" style="left:218px;top:401.5px;line-height:11px;height:11px;color:#a8a8a8;">0000026C529D28AF</div>
<div class="m" style="left:368px;top:401.5px;line-height:11px;height:11px;color:#e6e6e6;width:143px;overflow:hidden;">48:8D0D 3A6A0000</div>
<div class="m" style="left:516px;top:401.5px;line-height:11px;height:11px;color:#e4e4e4;width:344px;overflow:hidden;"><span style="color:#8c8cff">lea</span> <span style="color:#b8a5ff">rcx</span><span style="color:#e4e4e4">,</span><span style="color:#e4e4e4">qword</span><span style="color:#e4e4e4"> </span><span style="color:#e4e4e4">ptr</span><span style="color:#e4e4e4"> </span><span style="color:#b8a5ff">ds</span><span style="color:#b8a5ff">:</span><span style="color:#e4e4e4">[</span><span style="color:#ff8468">26C529D92F0</span><span style="color:#e4e4e4">]</span></div>
<div class="b" style="left:203.2px;top:414.5px;width:6px;height:6px;border-radius:50%;background:#464646"></div>
<div class="m" style="left:218px;top:412.5px;line-height:11px;height:11px;color:#a8a8a8;">0000026C529D28B6</div>
<div class="m" style="left:368px;top:412.5px;line-height:11px;height:11px;color:#e6e6e6;width:143px;overflow:hidden;">FF15 D4D7FFFF</div>
<div class="m" style="left:516px;top:412.5px;line-height:11px;height:11px;color:#e4e4e4;width:344px;overflow:hidden;"><span style="color:#ff4f73">call</span> <span style="color:#e4e4e4">qword</span><span style="color:#e4e4e4"> </span><span style="color:#e4e4e4">ptr</span><span style="color:#e4e4e4"> </span><span style="color:#b8a5ff">ds</span><span style="color:#b8a5ff">:</span><span style="color:#e4e4e4">[</span><span style="color:#ff8468">&lt;&amp;OutputDebugStringW&gt;</span><span style="color:#e4e4e4">]</span></div>
<div class="b" style="left:203.2px;top:425.5px;width:6px;height:6px;border-radius:50%;background:#464646"></div>
<div class="m" style="left:218px;top:423.5px;line-height:11px;height:11px;color:#a8a8a8;">0000026C529D28BC</div>
<div class="m" style="left:368px;top:423.5px;line-height:11px;height:11px;color:#e6e6e6;width:143px;overflow:hidden;">90</div>
<div class="m" style="left:516px;top:423.5px;line-height:11px;height:11px;color:#e4e4e4;width:344px;overflow:hidden;"><span style="color:#b4b4b4">nop</span></div>
<div class="b" style="left:203.2px;top:436.5px;width:6px;height:6px;border-radius:50%;background:#464646"></div>
<div class="m" style="left:218px;top:434.5px;line-height:11px;height:11px;color:#a8a8a8;">0000026C529D28BD</div>
<div class="m" style="left:368px;top:434.5px;line-height:11px;height:11px;color:#e6e6e6;width:143px;overflow:hidden;">33C0</div>
<div class="m" style="left:516px;top:434.5px;line-height:11px;height:11px;color:#e4e4e4;width:344px;overflow:hidden;"><span style="color:#8c8cff">xor</span> <span style="color:#b8a5ff">eax</span><span style="color:#e4e4e4">,</span><span style="color:#b8a5ff">eax</span></div>
<div class="b" style="left:203.2px;top:447.5px;width:6px;height:6px;border-radius:50%;background:#464646"></div>
<div class="m" style="left:218px;top:445.5px;line-height:11px;height:11px;color:#a8a8a8;">0000026C529D28BF</div>
<div class="m" style="left:368px;top:445.5px;line-height:11px;height:11px;color:#e6e6e6;width:143px;overflow:hidden;">85C0</div>
<div class="m" style="left:516px;top:445.5px;line-height:11px;height:11px;color:#e4e4e4;width:344px;overflow:hidden;"><span style="color:#8c8cff">test</span> <span style="color:#b8a5ff">eax</span><span style="color:#e4e4e4">,</span><span style="color:#b8a5ff">eax</span></div>
<div class="b" style="left:203.2px;top:458.5px;width:6px;height:6px;border-radius:50%;background:#464646"></div>
<div class="m" style="left:218px;top:456.5px;line-height:11px;height:11px;color:#a8a8a8;">0000026C529D28C1</div>
<svg class="b" style="left:352px;top:458.0px;" width="7" height="8" viewBox="0 0 7 8"><path d="M1 5 L3.5 2 L6 5" fill="none" stroke="#b41818" stroke-width="1"/></svg>
<div class="m" style="left:368px;top:456.5px;line-height:11px;height:11px;color:#e6e6e6;width:143px;overflow:hidden;">75 A9</div>
<div class="m" style="left:516px;top:456.5px;line-height:11px;height:11px;color:#e4e4e4;width:344px;overflow:hidden;"><span style="color:#ff4f73">jne</span> <span style="color:#ff8468">26C529D286C</span></div>
<div class="b" style="left:203.2px;top:469.5px;width:6px;height:6px;border-radius:50%;background:#464646"></div>
<div class="m" style="left:218px;top:467.5px;line-height:11px;height:11px;color:#a8a8a8;">0000026C529D28C3</div>
<div class="m" style="left:368px;top:467.5px;line-height:11px;height:11px;color:#e6e6e6;width:143px;overflow:hidden;">C78424 50030000 00242200</div>
<div class="m" style="left:516px;top:467.5px;line-height:11px;height:11px;color:#e4e4e4;width:344px;overflow:hidden;"><span style="color:#8c8cff">mov</span> <span style="color:#e4e4e4">dword</span><span style="color:#e4e4e4"> </span><span style="color:#e4e4e4">ptr</span><span style="color:#e4e4e4"> </span><span style="color:#b8a5ff">ss</span><span style="color:#b8a5ff">:</span><span style="color:#e4e4e4">[</span><span style="color:#b8a5ff">rsp</span><span style="color:#e4e4e4">+</span><span style="color:#ff8468">350</span><span style="color:#e4e4e4">]</span><span style="color:#e4e4e4">,</span><span style="color:#ff8468">222400</span></div>
<div class="b" style="left:203.2px;top:480.5px;width:6px;height:6px;border-radius:50%;background:#464646"></div>
<div class="m" style="left:218px;top:478.5px;line-height:11px;height:11px;color:#a8a8a8;">0000026C529D28CE</div>
<div class="m" style="left:368px;top:478.5px;line-height:11px;height:11px;color:#e6e6e6;width:143px;overflow:hidden;">48:C74424 30 00000000</div>
<div class="m" style="left:516px;top:478.5px;line-height:11px;height:11px;color:#e4e4e4;width:344px;overflow:hidden;"><span style="color:#8c8cff">mov</span> <span style="color:#e4e4e4">qword</span><span style="color:#e4e4e4"> </span><span style="color:#e4e4e4">ptr</span><span style="color:#e4e4e4"> </span><span style="color:#b8a5ff">ss</span><span style="color:#b8a5ff">:</span><span style="color:#e4e4e4">[</span><span style="color:#b8a5ff">rsp</span><span style="color:#e4e4e4">+</span><span style="color:#ff8468">30</span><span style="color:#e4e4e4">]</span><span style="color:#e4e4e4">,</span><span style="color:#ff8468">0</span></div>
<div class="b" style="left:203.2px;top:491.5px;width:6px;height:6px;border-radius:50%;background:#464646"></div>
<div class="m" style="left:218px;top:489.5px;line-height:11px;height:11px;color:#a8a8a8;">0000026C529D28D7</div>
<div class="m" style="left:368px;top:489.5px;line-height:11px;height:11px;color:#e6e6e6;width:143px;overflow:hidden;">C74424 28 00000000</div>
<div class="m" style="left:516px;top:489.5px;line-height:11px;height:11px;color:#e4e4e4;width:344px;overflow:hidden;"><span style="color:#8c8cff">mov</span> <span style="color:#e4e4e4">dword</span><span style="color:#e4e4e4"> </span><span style="color:#e4e4e4">ptr</span><span style="color:#e4e4e4"> </span><span style="color:#b8a5ff">ss</span><span style="color:#b8a5ff">:</span><span style="color:#e4e4e4">[</span><span style="color:#b8a5ff">rsp</span><span style="color:#e4e4e4">+</span><span style="color:#ff8468">28</span><span style="color:#e4e4e4">]</span><span style="color:#e4e4e4">,</span><span style="color:#ff8468">0</span></div>
<div class="b" style="left:203.2px;top:502.5px;width:6px;height:6px;border-radius:50%;background:#464646"></div>
<div class="m" style="left:218px;top:500.5px;line-height:11px;height:11px;color:#a8a8a8;">0000026C529D28DF</div>
<div class="m" style="left:368px;top:500.5px;line-height:11px;height:11px;color:#e6e6e6;width:143px;overflow:hidden;">C74424 20 03000000</div>
<div class="m" style="left:516px;top:500.5px;line-height:11px;height:11px;color:#e4e4e4;width:344px;overflow:hidden;"><span style="color:#8c8cff">mov</span> <span style="color:#e4e4e4">dword</span><span style="color:#e4e4e4"> </span><span style="color:#e4e4e4">ptr</span><span style="color:#e4e4e4"> </span><span style="color:#b8a5ff">ss</span><span style="color:#b8a5ff">:</span><span style="color:#e4e4e4">[</span><span style="color:#b8a5ff">rsp</span><span style="color:#e4e4e4">+</span><span style="color:#ff8468">20</span><span style="color:#e4e4e4">]</span><span style="color:#e4e4e4">,</span><span style="color:#ff8468">3</span></div>
<div class="b" style="left:203.2px;top:513.5px;width:6px;height:6px;border-radius:50%;background:#464646"></div>
<div class="m" style="left:218px;top:511.5px;line-height:11px;height:11px;color:#a8a8a8;">0000026C529D28E7</div>
<div class="m" style="left:368px;top:511.5px;line-height:11px;height:11px;color:#e6e6e6;width:143px;overflow:hidden;">45:33C9</div>
<div class="m" style="left:516px;top:511.5px;line-height:11px;height:11px;color:#e4e4e4;width:344px;overflow:hidden;"><span style="color:#8c8cff">xor</span> <span style="color:#b8a5ff">r9d</span><span style="color:#e4e4e4">,</span><span style="color:#b8a5ff">r9d</span></div>
<div class="b" style="left:203.2px;top:524.5px;width:6px;height:6px;border-radius:50%;background:#464646"></div>
<div class="m" style="left:218px;top:522.5px;line-height:11px;height:11px;color:#a8a8a8;">0000026C529D28EA</div>
<div class="m" style="left:368px;top:522.5px;line-height:11px;height:11px;color:#e6e6e6;width:143px;overflow:hidden;">45:33C0</div>
<div class="m" style="left:516px;top:522.5px;line-height:11px;height:11px;color:#e4e4e4;width:344px;overflow:hidden;"><span style="color:#8c8cff">xor</span> <span style="color:#b8a5ff">r8d</span><span style="color:#e4e4e4">,</span><span style="color:#b8a5ff">r8d</span></div>
<div class="b" style="left:203.2px;top:535.5px;width:6px;height:6px;border-radius:50%;background:#464646"></div>
<div class="m" style="left:218px;top:533.5px;line-height:11px;height:11px;color:#a8a8a8;">0000026C529D28ED</div>
<div class="m" style="left:368px;top:533.5px;line-height:11px;height:11px;color:#e6e6e6;width:143px;overflow:hidden;">BA 000000C0</div>
<div class="m" style="left:516px;top:533.5px;line-height:11px;height:11px;color:#e4e4e4;width:344px;overflow:hidden;"><span style="color:#8c8cff">mov</span> <span style="color:#b8a5ff">edx</span><span style="color:#e4e4e4">,</span><span style="color:#ff8468">C0000000</span></div>
<div class="b" style="left:203.2px;top:546.5px;width:6px;height:6px;border-radius:50%;background:#464646"></div>
<div class="m" style="left:218px;top:544.5px;line-height:11px;height:11px;color:#a8a8a8;">0000026C529D28F2</div>
<div class="m" style="left:368px;top:544.5px;line-height:11px;height:11px;color:#e6e6e6;width:143px;overflow:hidden;">48:8D0D A3410000</div>
<div class="m" style="left:516px;top:544.5px;line-height:11px;height:11px;color:#e4e4e4;width:344px;overflow:hidden;"><span style="color:#8c8cff">lea</span> <span style="color:#b8a5ff">rcx</span><span style="color:#e4e4e4">,</span><span style="color:#e4e4e4">qword</span><span style="color:#e4e4e4"> </span><span style="color:#e4e4e4">ptr</span><span style="color:#e4e4e4"> </span><span style="color:#b8a5ff">ds</span><span style="color:#b8a5ff">:</span><span style="color:#e4e4e4">[</span><span style="color:#ff8468">26C529D6A9C</span><span style="color:#e4e4e4">]</span></div>
<div class="m" style="left:864px;top:544.5px;line-height:11px;height:11px;color:#b8b8b8;width:593px;overflow:hidden;">0000026C529D6A9C:L"\\\\.\\baaaa_bae"</div>
<div class="b" style="left:203.2px;top:557.5px;width:6px;height:6px;border-radius:50%;background:#464646"></div>
<div class="m" style="left:218px;top:555.5px;line-height:11px;height:11px;color:#a8a8a8;">0000026C529D28F9</div>
<div class="m" style="left:368px;top:555.5px;line-height:11px;height:11px;color:#e6e6e6;width:143px;overflow:hidden;">FF15 29D7FFFF</div>
<div class="m" style="left:516px;top:555.5px;line-height:11px;height:11px;color:#e4e4e4;width:344px;overflow:hidden;"><span style="color:#ff4f73">call</span> <span style="color:#e4e4e4">qword</span><span style="color:#e4e4e4"> </span><span style="color:#e4e4e4">ptr</span><span style="color:#e4e4e4"> </span><span style="color:#b8a5ff">ds</span><span style="color:#b8a5ff">:</span><span style="color:#e4e4e4">[</span><span style="color:#ff8468">&lt;&amp;CreateFileW&gt;</span><span style="color:#e4e4e4">]</span></div>
<div class="b" style="left:203.2px;top:568.5px;width:6px;height:6px;border-radius:50%;background:#464646"></div>
<div class="m" style="left:218px;top:566.5px;line-height:11px;height:11px;color:#a8a8a8;">0000026C529D28FF</div>
<div class="m" style="left:368px;top:566.5px;line-height:11px;height:11px;color:#e6e6e6;width:143px;overflow:hidden;">48:898424 00030000</div>
<div class="m" style="left:516px;top:566.5px;line-height:11px;height:11px;color:#e4e4e4;width:344px;overflow:hidden;"><span style="color:#8c8cff">mov</span> <span style="color:#e4e4e4">qword</span><span style="color:#e4e4e4"> </span><span style="color:#e4e4e4">ptr</span><span style="color:#e4e4e4"> </span><span style="color:#b8a5ff">ss</span><span style="color:#b8a5ff">:</span><span style="color:#e4e4e4">[</span><span style="color:#b8a5ff">rsp</span><span style="color:#e4e4e4">+</span><span style="color:#ff8468">300</span><span style="color:#e4e4e4">]</span><span style="color:#e4e4e4">,</span><span style="color:#b8a5ff">rax</span></div>
<div class="b" style="left:203.2px;top:579.5px;width:6px;height:6px;border-radius:50%;background:#464646"></div>
<div class="m" style="left:218px;top:577.5px;line-height:11px;height:11px;color:#a8a8a8;">0000026C529D2907</div>
<div class="m" style="left:368px;top:577.5px;line-height:11px;height:11px;color:#e6e6e6;width:143px;overflow:hidden;">48:83BC24 00030000 FF</div>
<div class="m" style="left:516px;top:577.5px;line-height:11px;height:11px;color:#e4e4e4;width:344px;overflow:hidden;"><span style="color:#8c8cff">cmp</span> <span style="color:#e4e4e4">qword</span><span style="color:#e4e4e4"> </span><span style="color:#e4e4e4">ptr</span><span style="color:#e4e4e4"> </span><span style="color:#b8a5ff">ss</span><span style="color:#b8a5ff">:</span><span style="color:#e4e4e4">[</span><span style="color:#b8a5ff">rsp</span><span style="color:#e4e4e4">+</span><span style="color:#ff8468">300</span><span style="color:#e4e4e4">]</span><span style="color:#e4e4e4">,</span><span style="color:#ff8468">FFFFFFFFFFFFFFFF</span></div>
<div class="b" style="left:203.2px;top:590.5px;width:6px;height:6px;border-radius:50%;background:#464646"></div>
<div class="m" style="left:218px;top:588.5px;line-height:11px;height:11px;color:#a8a8a8;">0000026C529D2910</div>
<svg class="b" style="left:352px;top:590.0px;" width="7" height="8" viewBox="0 0 7 8"><path d="M1 2 L3.5 5 L6 2" fill="none" stroke="#b41818" stroke-width="1"/></svg>
<div class="m" style="left:368px;top:588.5px;line-height:11px;height:11px;color:#e6e6e6;width:143px;overflow:hidden;">75 5E</div>
<div class="m" style="left:516px;top:588.5px;line-height:11px;height:11px;color:#e4e4e4;width:344px;overflow:hidden;"><span style="color:#ff4f73">jne</span> <span style="color:#ff8468">26C529D2970</span></div>
<div class="b" style="left:203.2px;top:601.5px;width:6px;height:6px;border-radius:50%;background:#464646"></div>
<div class="m" style="left:218px;top:599.5px;line-height:11px;height:11px;color:#a8a8a8;">0000026C529D2912</div>
<div class="m" style="left:368px;top:599.5px;line-height:11px;height:11px;color:#e6e6e6;width:143px;overflow:hidden;">48:833D 76D7FFFF 00</div>
<div class="m" style="left:516px;top:599.5px;line-height:11px;height:11px;color:#e4e4e4;width:344px;overflow:hidden;"><span style="color:#8c8cff">cmp</span> <span style="color:#e4e4e4">qword</span><span style="color:#e4e4e4"> </span><span style="color:#e4e4e4">ptr</span><span style="color:#e4e4e4"> </span><span style="color:#b8a5ff">ds</span><span style="color:#b8a5ff">:</span><span style="color:#e4e4e4">[</span><span style="color:#ff8468">&lt;&amp;OutputDebugStringW&gt;</span><span style="color:#e4e4e4">]</span><span style="color:#e4e4e4">,</span><span style="color:#ff8468">0</span></div>
<div class="b" style="left:203.2px;top:612.5px;width:6px;height:6px;border-radius:50%;background:#464646"></div>
<div class="m" style="left:218px;top:610.5px;line-height:11px;height:11px;color:#a8a8a8;">0000026C529D291A</div>
<svg class="b" style="left:352px;top:612.0px;" width="7" height="8" viewBox="0 0 7 8"><path d="M1 2 L3.5 5 L6 2" fill="none" stroke="#b41818" stroke-width="1"/></svg>
<div class="m" style="left:368px;top:610.5px;line-height:11px;height:11px;color:#e6e6e6;width:143px;overflow:hidden;">74 47</div>
<div class="m" style="left:516px;top:610.5px;line-height:11px;height:11px;color:#e4e4e4;width:344px;overflow:hidden;"><span style="color:#ff4f73">je</span> <span style="color:#ff8468">26C529D2963</span></div>
<div class="b" style="left:203.2px;top:623.5px;width:6px;height:6px;border-radius:50%;background:#464646"></div>
<div class="m" style="left:218px;top:621.5px;line-height:11px;height:11px;color:#a8a8a8;">0000026C529D291C</div>
<div class="m" style="left:368px;top:621.5px;line-height:11px;height:11px;color:#e6e6e6;width:143px;overflow:hidden;">4C:8D05 95410000</div>
<div class="m" style="left:516px;top:621.5px;line-height:11px;height:11px;color:#e4e4e4;width:344px;overflow:hidden;"><span style="color:#8c8cff">lea</span> <span style="color:#b8a5ff">r8</span><span style="color:#e4e4e4">,</span><span style="color:#e4e4e4">qword</span><span style="color:#e4e4e4"> </span><span style="color:#e4e4e4">ptr</span><span style="color:#e4e4e4"> </span><span style="color:#b8a5ff">ds</span><span style="color:#b8a5ff">:</span><span style="color:#e4e4e4">[</span><span style="color:#ff8468">26C529D6AB8</span><span style="color:#e4e4e4">]</span></div>
<div class="m" style="left:864px;top:621.5px;line-height:11px;height:11px;color:#b8b8b8;width:593px;overflow:hidden;">0000026C529D6AB8:L"[SHELLCODE] [SHELLCODE] [!!!!] Failed to open device -&gt; INVALID_HANDLE</div>
<div class="b" style="left:203.2px;top:634.5px;width:6px;height:6px;border-radius:50%;background:#464646"></div>
<div class="m" style="left:218px;top:632.5px;line-height:11px;height:11px;color:#a8a8a8;">0000026C529D2923</div>
<div class="m" style="left:368px;top:632.5px;line-height:11px;height:11px;color:#e6e6e6;width:143px;overflow:hidden;">BA 00010000</div>
<div class="m" style="left:516px;top:632.5px;line-height:11px;height:11px;color:#e4e4e4;width:344px;overflow:hidden;"><span style="color:#8c8cff">mov</span> <span style="color:#b8a5ff">edx</span><span style="color:#e4e4e4">,</span><span style="color:#ff8468">100</span></div>
<svg class="b" style="left:0;top:0" width="214" height="670" viewBox="0 0 214 670"><path d="M202 109.5 H176.5" fill="none" stroke="#acacac" stroke-width="1" stroke-dasharray="4 2" shape-rendering="crispEdges"/><path d="M176.5 109.5 V104.5" fill="none" stroke="#acacac" stroke-width="1" shape-rendering="crispEdges"/><path d="M173.0 108.5 L176.5 103.5 L180.0 108.5" fill="none" stroke="#acacac" stroke-width="1"/><path d="M25 219 H201 M196.5 214.5 L201.5 219 L196.5 223.5" fill="none" stroke="#464646" stroke-width="2"/><path d="M202 461.5 H143.5 V263.5 H201" fill="none" stroke="#acacac" stroke-width="1" stroke-dasharray="4 2" shape-rendering="crispEdges"/><path d="M198 260.0 L202 263.5 L198 267.0" fill="none" stroke="#acacac" stroke-width="1"/><path d="M202 274.5 H154.5 V439.5 H201" fill="none" stroke="#acacac" stroke-width="1" stroke-dasharray="4 2" shape-rendering="crispEdges"/><path d="M198 436.0 L202 439.5 L198 443.0" fill="none" stroke="#acacac" stroke-width="1"/><path d="M202 351.5 H165.5 V406.5 H201" fill="none" stroke="#acacac" stroke-width="1" stroke-dasharray="4 2" shape-rendering="crispEdges"/><path d="M198 403.0 L202 406.5 L198 410.0" fill="none" stroke="#acacac" stroke-width="1"/><path d="M202 395.5 H176.5 V439.5 H201" fill="none" stroke="#b8b8b8" stroke-width="1" shape-rendering="crispEdges"/><path d="M202 593.5 H165.5 V656" fill="none" stroke="#acacac" stroke-width="1" stroke-dasharray="4 2" shape-rendering="crispEdges"/><path d="M162.0 656 L165.5 661 L169.0 656" fill="none" stroke="#acacac" stroke-width="1"/><path d="M202 615.5 H176.5 V656" fill="none" stroke="#acacac" stroke-width="1" stroke-dasharray="4 2" shape-rendering="crispEdges"/><path d="M173.0 656 L176.5 661 L180.0 656" fill="none" stroke="#acacac" stroke-width="1"/></svg>
<div class="b" style="left:3px;top:214.0px;width:22px;height:11px;background:#414141;"></div>
<div class="m" style="left:3px;top:214.5px;line-height:11px;height:11px;color:#7cf45c;">RIP</div>
<div class="b" style="left:203px;top:150px;width:667px;height:104px;border:5px solid #ed1c24;"></div>
<svg class="b" style="left:1460.0px;top:106px" width="12" height="12" viewBox="-6 -6 12 12"><path d="M-4.2 3.9 L0 -3.9 L4.2 3.9Z" fill="#9a9a9a"/></svg>
<svg class="b" style="left:1460.0px;top:629px" width="12" height="12" viewBox="-6 -6 12 12"><path d="M-4.2 -3.9 L0 3.9 L4.2 -3.9Z" fill="#9a9a9a"/></svg>
<div class="b" style="left:1461px;top:120px;width:10px;height:507px;background:#424242;border-radius:4px;"></div>
<div class="b" style="left:1461px;top:293px;width:10px;height:24px;background:#727272;border-radius:4px;"></div>
<svg class="b" style="left:218px;top:646.0px" width="12" height="12" viewBox="-6 -6 12 12"><path d="M3.9 -4.2 L-3.9 0 L3.9 4.2Z" fill="#9a9a9a"/></svg>
<svg class="b" style="left:1443px;top:646.0px" width="12" height="12" viewBox="-6 -6 12 12"><path d="M-3.9 -4.2 L3.9 0 L-3.9 4.2Z" fill="#9a9a9a"/></svg>
<div class="b" style="left:232px;top:647px;width:1209px;height:10px;background:#424242;border-radius:4px;"></div>
<div class="b" style="left:232px;top:647px;width:745px;height:10px;background:#727272;border-radius:4px;"></div>
<div class="b" style="left:1477px;top:103px;width:442px;height:23px;border:1px solid #888;border-radius:2px;box-sizing:border-box;background:#212121"></div>
<div class="m" style="left:1670px;top:110.0px;line-height:11px;height:11px;color:#e6e6e6;">Hide FPU</div>
<div class="b" style="left:1526px;top:131px;width:114px;height:12px;background:#414141;"></div>
<div class="m" style="left:1484px;top:132.0px;line-height:12px;height:12px;color:#b8a5ff;">RAX</div>
<div class="b" style="left:1484px;top:141px;width:21px;height:2px;background:#f0e040;"></div>
<div class="m" style="left:1527px;top:132.0px;line-height:12px;height:12px;color:#e6e6e6;">0000026C529D0000</div>
<div class="m" style="left:1484px;top:144.0px;line-height:12px;height:12px;color:#b8a5ff;">RBX</div>
<div class="m" style="left:1527px;top:144.0px;line-height:12px;height:12px;color:#e6e6e6;">0000000000000000</div>
<div class="m" style="left:1484px;top:156.0px;line-height:12px;height:12px;color:#b8a5ff;">RCX</div>
<div class="b" style="left:1484px;top:165px;width:21px;height:2px;background:#e8303a;"></div>
<div class="m" style="left:1527px;top:156.0px;line-height:12px;height:12px;color:#ff8468;">FFFFFFFFFFFFFFFF</div>
<div class="m" style="left:1484px;top:168.0px;line-height:12px;height:12px;color:#b8a5ff;">RDX</div>
<div class="b" style="left:1484px;top:177px;width:21px;height:2px;background:#e8303a;"></div>
<div class="m" style="left:1527px;top:168.0px;line-height:12px;height:12px;color:#e6e6e6;">000000869D6FFDD0</div>
<div class="m" style="left:1484px;top:180.0px;line-height:12px;height:12px;color:#b8a5ff;">RBP</div>
<div class="m" style="left:1527px;top:180.0px;line-height:12px;height:12px;color:#e6e6e6;">0000000000000000</div>
<div class="m" style="left:1484px;top:192.0px;line-height:12px;height:12px;color:#b8a5ff;">RSP</div>
<div class="b" style="left:1484px;top:201px;width:21px;height:2px;background:#e8303a;"></div>
<div class="m" style="left:1527px;top:192.0px;line-height:12px;height:12px;color:#e6e6e6;">000000869D6FFA10</div>
<div class="m" style="left:1484px;top:204.0px;line-height:12px;height:12px;color:#b8a5ff;">RSI</div>
<div class="m" style="left:1527px;top:204.0px;line-height:12px;height:12px;color:#e6e6e6;">0000000000000000</div>
<div class="m" style="left:1484px;top:216.0px;line-height:12px;height:12px;color:#b8a5ff;">RDI</div>
<div class="m" style="left:1527px;top:216.0px;line-height:12px;height:12px;color:#e6e6e6;">0000000000000000</div>
<div class="m" style="left:1484px;top:240.0px;line-height:12px;height:12px;color:#b8a5ff;">R8</div>
<div class="b" style="left:1484px;top:249px;width:14px;height:2px;background:#e8303a;"></div>
<div class="m" style="left:1527px;top:240.0px;line-height:12px;height:12px;color:#e6e6e6;">000000869D6FFDC8</div>
<div class="m" style="left:1484px;top:252.0px;line-height:12px;height:12px;color:#b8a5ff;">R9</div>
<div class="b" style="left:1484px;top:261px;width:14px;height:2px;background:#e8303a;"></div>
<div class="m" style="left:1527px;top:252.0px;line-height:12px;height:12px;color:#e6e6e6;">0000000000008000</div>
<div class="m" style="left:1484px;top:264.0px;line-height:12px;height:12px;color:#b8a5ff;">R10</div>
<div class="b" style="left:1484px;top:273px;width:21px;height:2px;background:#f0e040;"></div>
<div class="m" style="left:1527px;top:264.0px;line-height:12px;height:12px;color:#e6e6e6;">2B930D69206562AF</div>
<div class="m" style="left:1484px;top:276.0px;line-height:12px;height:12px;color:#b8a5ff;">R11</div>
<div class="b" style="left:1484px;top:285px;width:21px;height:2px;background:#f0e040;"></div>
<div class="m" style="left:1527px;top:276.0px;line-height:12px;height:12px;color:#e6e6e6;">000000000000000B</div>
<div class="m" style="left:1484px;top:288.0px;line-height:12px;height:12px;color:#b8a5ff;">R12</div>
<div class="m" style="left:1527px;top:288.0px;line-height:12px;height:12px;color:#e6e6e6;">0000000000000000</div>
<div class="m" style="left:1484px;top:300.0px;line-height:12px;height:12px;color:#b8a5ff;">R13</div>
<div class="m" style="left:1527px;top:300.0px;line-height:12px;height:12px;color:#e6e6e6;">0000000000000000</div>
<div class="m" style="left:1484px;top:312.0px;line-height:12px;height:12px;color:#b8a5ff;">R14</div>
<div class="m" style="left:1527px;top:312.0px;line-height:12px;height:12px;color:#e6e6e6;">0000000000000000</div>
<div class="m" style="left:1484px;top:324.0px;line-height:12px;height:12px;color:#b8a5ff;">R15</div>
<div class="m" style="left:1527px;top:324.0px;line-height:12px;height:12px;color:#e6e6e6;">0000000000000000</div>
<div class="m" style="left:1484px;top:348.0px;line-height:12px;height:12px;color:#b8a5ff;">RIP</div>
<div class="m" style="left:1527px;top:348.0px;line-height:12px;height:12px;color:#ff8468;">0000026C529D285D</div>
<div class="m" style="left:1484px;top:372.0px;line-height:12px;height:12px;color:#e6e6e6;"><span style="color:#b8a5ff">RFLAGS</span><span style="color:#e6e6e6">   0000000000000246</span></div>
<div class="m" style="left:1484px;top:384.0px;line-height:12px;height:12px;color:#e6e6e6;"><span style="color:#b8a5ff">ZF</span><span style="color:#e6e6e6"> 1  </span><span style="color:#b8a5ff">PF</span><span style="color:#e6e6e6"> 1  </span><span style="color:#b8a5ff">AF</span><span style="color:#e6e6e6"> 0</span></div>
<div class="m" style="left:1484px;top:396.0px;line-height:12px;height:12px;color:#e6e6e6;"><span style="color:#b8a5ff">OF</span><span style="color:#e6e6e6"> 0  </span><span style="color:#b8a5ff">SF</span><span style="color:#e6e6e6"> 0  </span><span style="color:#b8a5ff">DF</span><span style="color:#e6e6e6"> 0</span></div>
<div class="m" style="left:1484px;top:408.0px;line-height:12px;height:12px;color:#e6e6e6;"><span style="color:#b8a5ff">CF</span><span style="color:#e6e6e6"> 0  </span><span style="color:#b8a5ff">TF</span><span style="color:#e6e6e6"> 0  </span><span style="color:#b8a5ff">IF</span><span style="color:#e6e6e6"> 1</span></div>
<div class="m" style="left:1485px;top:432.0px;line-height:12px;height:12px;color:#e6e6e6;"><span style="color:#b8a5ff">LastError </span><span style="color:#e6e6e6"> 00000000 (ERROR_SUCCESS)</span></div>
<div class="m" style="left:1485px;top:444.0px;line-height:12px;height:12px;color:#e6e6e6;"><span style="color:#b8a5ff">LastStatus</span><span style="color:#e6e6e6"> C000000D (STATUS_INVALID_PARAMETER)</span></div>
<div class="m" style="left:1485px;top:468.0px;line-height:12px;height:12px;color:#e6e6e6;"><span style="color:#b8a5ff">GS</span><span style="color:#e6e6e6"> 002B  </span><span style="color:#b8a5ff">FS</span><span style="color:#e6e6e6"> 0053</span></div>
<div class="m" style="left:1485px;top:480.0px;line-height:12px;height:12px;color:#e6e6e6;"><span style="color:#b8a5ff">ES</span><span style="color:#e6e6e6"> 002B  </span><span style="color:#b8a5ff">DS</span><span style="color:#e6e6e6"> 002B</span></div>
<div class="m" style="left:1485px;top:492.0px;line-height:12px;height:12px;color:#e6e6e6;"><span style="color:#b8a5ff">CS</span><span style="color:#e6e6e6"> 0033  </span><span style="color:#b8a5ff">SS</span><span style="color:#e6e6e6"> 002B</span></div>
<div class="b" style="left:1548px;top:490px;width:14px;height:1.5px;background:#9cf05a;"></div>
<div class="b" style="left:1548px;top:502px;width:14px;height:1.5px;background:#9cf05a;"></div>
<div class="m" style="left:1485px;top:516.0px;line-height:12px;height:12px;color:#e6e6e6;"><span style="color:#b8a5ff">ST(0)</span><span style="color:#e6e6e6"> 00000000000000000000 </span><span style="color:#f0506e">x87r0 Empty 0.000000000000000000</span></div>
<div class="m" style="left:1485px;top:528.0px;line-height:12px;height:12px;color:#e6e6e6;"><span style="color:#b8a5ff">ST(1)</span><span style="color:#e6e6e6"> 00000000000000000000 </span><span style="color:#f0506e">x87r1 Empty 0.000000000000000000</span></div>
<div class="m" style="left:1485px;top:540.0px;line-height:12px;height:12px;color:#e6e6e6;"><span style="color:#b8a5ff">ST(2)</span><span style="color:#e6e6e6"> 00000000000000000000 </span><span style="color:#f0506e">x87r2 Empty 0.000000000000000000</span></div>
<div class="m" style="left:1485px;top:552.0px;line-height:12px;height:12px;color:#e6e6e6;height:8px;overflow:hidden;"><span style="color:#b8a5ff">ST(3)</span><span style="color:#e6e6e6"> 00000000000000000000 </span><span style="color:#f0506e">x87r3 Empty 0.000000000000000000</span></div>
<div class="b" style="left:1474px;top:121px;width:198px;height:239px;border:5px solid #ed1c24;"></div>
<svg class="b" style="left:1904.0px;top:128px" width="12" height="12" viewBox="-6 -6 12 12"><path d="M-4.2 3.9 L0 -3.9 L4.2 3.9Z" fill="#9a9a9a"/></svg>
<svg class="b" style="left:1904.0px;top:546px" width="12" height="12" viewBox="-6 -6 12 12"><path d="M-4.2 -3.9 L0 3.9 L4.2 -3.9Z" fill="#9a9a9a"/></svg>
<div class="b" style="left:1905px;top:142px;width:10px;height:402px;background:#424242;border-radius:4px;"></div>
<div class="b" style="left:1905px;top:142px;width:10px;height:160px;background:#6e6e6e;border-radius:4px;"></div>
<svg class="b" style="left:1479px;top:563.0px" width="12" height="12" viewBox="-6 -6 12 12"><path d="M3.9 -4.2 L-3.9 0 L3.9 4.2Z" fill="#9a9a9a"/></svg>
<svg class="b" style="left:1886px;top:563.0px" width="12" height="12" viewBox="-6 -6 12 12"><path d="M-3.9 -4.2 L3.9 0 L-3.9 4.2Z" fill="#9a9a9a"/></svg>
<div class="b" style="left:1493px;top:564px;width:391px;height:10px;background:#424242;border-radius:4px;"></div>
<div class="b" style="left:1493px;top:564px;width:166px;height:10px;background:#727272;border-radius:4px;"></div>
<div class="b" style="left:1477px;top:578px;width:443px;height:1px;background:#4a4a4a;"></div>
<div class="b" style="left:1478px;top:580px;width:268px;height:26px;background:#1e1e1e;border:1px solid #343434;border-radius:2px;box-sizing:border-box"></div>
<div class="u" style="left:1482px;top:586px;color:#e6e6e6;font-size:11px;transform:scaleX(1.0173);transform-origin:0 50%;">Default (x64 fastcall)</div>
<svg class="b" style="left:1731px;top:587px" width="12" height="12" viewBox="-6 -6 12 12"><path d="M-4 -2.3 L0 2.3 L4 -2.3Z" fill="#a0a0a0"/></svg>
<div class="b" style="left:1749px;top:580px;width:100px;height:26px;background:#2b2b2b;border-radius:2px;"></div>
<svg class="b" style="left:1751.5px;top:587px" width="12" height="12" viewBox="-6 -6 12 12"><path d="M-4 -2.3 L0 2.3 L4 -2.3Z" fill="#a0a0a0"/></svg>
<svg class="b" style="left:1836.5px;top:587px" width="12" height="12" viewBox="-6 -6 12 12"><path d="M-4 2.3 L0 -2.3 L4 2.3Z" fill="#a0a0a0"/></svg>
<div class="u" style="left:1772px;top:586px;color:#e6e6e6;font-size:11px;transform:scaleX(0.9808);transform-origin:0 50%;">5</div>
<div class="b" style="left:1854px;top:584px;width:16px;height:16px;border:1px solid #8a8a8a;border-radius:3px;box-sizing:border-box;background:#212121"></div>
<div class="u" style="left:1875px;top:585px;color:#e6e6e6;font-size:11px;transform:scaleX(0.9377);transform-origin:0 50%;">Unlocked</div>
<div class="b" style="left:1479px;top:608px;width:421px;height:11px;background:#414141;"></div>
<div class="m" style="left:1482px;top:608.5px;line-height:11px;height:11px;color:#e6e6e6;">1: rcx FFFFFFFFFFFFFFFF FFFFFFFFFFFFFFFF</div>
<div class="m" style="left:1482px;top:619.5px;line-height:11px;height:11px;color:#e6e6e6;">2: rdx 000000869D6FFDD0 000000869D6FFDD0</div>
<div class="m" style="left:1482px;top:630.5px;line-height:11px;height:11px;color:#e6e6e6;">3: r8 000000869D6FFDC8 000000869D6FFDC8</div>
<div class="m" style="left:1482px;top:641.5px;line-height:11px;height:11px;color:#e6e6e6;">4: r9 0000000000008000 0000000000008000</div>
<div class="m" style="left:1482px;top:652.5px;line-height:11px;height:11px;color:#e6e6e6;">5: [rsp+20] 0000000000000400 0000000000000400</div>
<svg class="b" style="left:1904.0px;top:610px" width="12" height="12" viewBox="-6 -6 12 12"><path d="M-4.2 3.9 L0 -3.9 L4.2 3.9Z" fill="#9a9a9a"/></svg>
<svg class="b" style="left:1904.0px;top:698px" width="12" height="12" viewBox="-6 -6 12 12"><path d="M-4.2 -3.9 L0 3.9 L4.2 -3.9Z" fill="#9a9a9a"/></svg>
<div class="b" style="left:1905px;top:624px;width:10px;height:72px;background:#424242;border-radius:4px;"></div>
<div class="b" style="left:1905px;top:624px;width:10px;height:72px;background:#727272;border-radius:4px;"></div>
<div class="m" style="left:6px;top:664.5px;line-height:11px;height:11px;color:#e6e6e6;">qword ptr ds:[0000026C529D0060 &lt;&amp;ZwFreeVirtualMemory&gt;]=&lt;ntdll.ZwFreeVirtualMemory&gt;</div>
<div class="m" style="left:6px;top:697.5px;line-height:11px;height:11px;color:#e6e6e6;">0000026C529D285D</div>
<div class="b" style="left:0px;top:713px;width:1920px;height:1px;background:#555;"></div>
<div class="b" style="left:2px;top:715px;width:88px;height:26px;background:#414141;border-radius:2px 2px 0 0;"></div>
<div class="b" style="left:2px;top:739px;width:88px;height:2px;background:#8a9ef5;"></div>
<div class="u" style="left:37px;top:720px;color:#8ea0ff;font-size:11px;transform:scaleX(0.9606);transform-origin:0 50%;">Dump 1</div>
<svg class="b" style="left:11px;top:719px;" width="20" height="16" viewBox="0 0 20 16"><defs><linearGradient id="tg" x1="0" y1="0" x2="1" y2="0"><stop offset="0" stop-color="#f4f4f4"/><stop offset=".5" stop-color="#c8c8c8"/><stop offset="1" stop-color="#f0f0f0"/></linearGradient></defs><rect x="5" y="1.5" width="12" height="9.5" rx="1" fill="#eeeeee" stroke="#8a8a8a" stroke-width=".5"/><path d="M7.5 2.5V10M10 2.5V10M12.5 2.5V10M15 2.5V10" stroke="#9a9a9a" stroke-width="1"/><path d="M1 4.5 Q1 3 2.5 3 H5 V11 H1 Z" fill="#f0b820"/><rect x="1.8" y="4" width="2.4" height="2.6" fill="#4a7ad0"/><rect x="0.8" y="10.5" width="16.5" height="1.2" fill="#444"/><circle cx="4.2" cy="12.3" r="1.7" fill="#1a1a1a"/><circle cx="4.2" cy="12.3" r=".7" fill="#aaa"/><circle cx="14" cy="12.3" r="1.7" fill="#1a1a1a"/><circle cx="14" cy="12.3" r=".7" fill="#aaa"/></svg>
<div class="b" style="left:92px;top:715px;width:88px;height:25px;background:#303030;border-radius:2px 2px 0 0;"></div>
<div class="u" style="left:127px;top:720px;color:#e6e6e6;font-size:11px;transform:scaleX(0.9606);transform-origin:0 50%;">Dump 2</div>
<svg class="b" style="left:101px;top:719px;" width="20" height="16" viewBox="0 0 20 16"><defs><linearGradient id="tg" x1="0" y1="0" x2="1" y2="0"><stop offset="0" stop-color="#f4f4f4"/><stop offset=".5" stop-color="#c8c8c8"/><stop offset="1" stop-color="#f0f0f0"/></linearGradient></defs><rect x="5" y="1.5" width="12" height="9.5" rx="1" fill="#eeeeee" stroke="#8a8a8a" stroke-width=".5"/><path d="M7.5 2.5V10M10 2.5V10M12.5 2.5V10M15 2.5V10" stroke="#9a9a9a" stroke-width="1"/><path d="M1 4.5 Q1 3 2.5 3 H5 V11 H1 Z" fill="#f0b820"/><rect x="1.8" y="4" width="2.4" height="2.6" fill="#4a7ad0"/><rect x="0.8" y="10.5" width="16.5" height="1.2" fill="#444"/><circle cx="4.2" cy="12.3" r="1.7" fill="#1a1a1a"/><circle cx="4.2" cy="12.3" r=".7" fill="#aaa"/><circle cx="14" cy="12.3" r="1.7" fill="#1a1a1a"/><circle cx="14" cy="12.3" r=".7" fill="#aaa"/></svg>
<div class="b" style="left:182px;top:715px;width:88px;height:25px;background:#303030;border-radius:2px 2px 0 0;"></div>
<div class="u" style="left:217px;top:720px;color:#e6e6e6;font-size:11px;transform:scaleX(0.9606);transform-origin:0 50%;">Dump 3</div>
<svg class="b" style="left:191px;top:719px;" width="20" height="16" viewBox="0 0 20 16"><defs><linearGradient id="tg" x1="0" y1="0" x2="1" y2="0"><stop offset="0" stop-color="#f4f4f4"/><stop offset=".5" stop-color="#c8c8c8"/><stop offset="1" stop-color="#f0f0f0"/></linearGradient></defs><rect x="5" y="1.5" width="12" height="9.5" rx="1" fill="#eeeeee" stroke="#8a8a8a" stroke-width=".5"/><path d="M7.5 2.5V10M10 2.5V10M12.5 2.5V10M15 2.5V10" stroke="#9a9a9a" stroke-width="1"/><path d="M1 4.5 Q1 3 2.5 3 H5 V11 H1 Z" fill="#f0b820"/><rect x="1.8" y="4" width="2.4" height="2.6" fill="#4a7ad0"/><rect x="0.8" y="10.5" width="16.5" height="1.2" fill="#444"/><circle cx="4.2" cy="12.3" r="1.7" fill="#1a1a1a"/><circle cx="4.2" cy="12.3" r=".7" fill="#aaa"/><circle cx="14" cy="12.3" r="1.7" fill="#1a1a1a"/><circle cx="14" cy="12.3" r=".7" fill="#aaa"/></svg>
<div class="b" style="left:272px;top:715px;width:88px;height:25px;background:#303030;border-radius:2px 2px 0 0;"></div>
<div class="u" style="left:307px;top:720px;color:#e6e6e6;font-size:11px;transform:scaleX(0.9606);transform-origin:0 50%;">Dump 4</div>
<svg class="b" style="left:281px;top:719px;" width="20" height="16" viewBox="0 0 20 16"><defs><linearGradient id="tg" x1="0" y1="0" x2="1" y2="0"><stop offset="0" stop-color="#f4f4f4"/><stop offset=".5" stop-color="#c8c8c8"/><stop offset="1" stop-color="#f0f0f0"/></linearGradient></defs><rect x="5" y="1.5" width="12" height="9.5" rx="1" fill="#eeeeee" stroke="#8a8a8a" stroke-width=".5"/><path d="M7.5 2.5V10M10 2.5V10M12.5 2.5V10M15 2.5V10" stroke="#9a9a9a" stroke-width="1"/><path d="M1 4.5 Q1 3 2.5 3 H5 V11 H1 Z" fill="#f0b820"/><rect x="1.8" y="4" width="2.4" height="2.6" fill="#4a7ad0"/><rect x="0.8" y="10.5" width="16.5" height="1.2" fill="#444"/><circle cx="4.2" cy="12.3" r="1.7" fill="#1a1a1a"/><circle cx="4.2" cy="12.3" r=".7" fill="#aaa"/><circle cx="14" cy="12.3" r="1.7" fill="#1a1a1a"/><circle cx="14" cy="12.3" r=".7" fill="#aaa"/></svg>
<div class="b" style="left:362px;top:715px;width:88px;height:25px;background:#303030;border-radius:2px 2px 0 0;"></div>
<div class="u" style="left:397px;top:720px;color:#e6e6e6;font-size:11px;transform:scaleX(0.9606);transform-origin:0 50%;">Dump 5</div>
<svg class="b" style="left:371px;top:719px;" width="20" height="16" viewBox="0 0 20 16"><defs><linearGradient id="tg" x1="0" y1="0" x2="1" y2="0"><stop offset="0" stop-color="#f4f4f4"/><stop offset=".5" stop-color="#c8c8c8"/><stop offset="1" stop-color="#f0f0f0"/></linearGradient></defs><rect x="5" y="1.5" width="12" height="9.5" rx="1" fill="#eeeeee" stroke="#8a8a8a" stroke-width=".5"/><path d="M7.5 2.5V10M10 2.5V10M12.5 2.5V10M15 2.5V10" stroke="#9a9a9a" stroke-width="1"/><path d="M1 4.5 Q1 3 2.5 3 H5 V11 H1 Z" fill="#f0b820"/><rect x="1.8" y="4" width="2.4" height="2.6" fill="#4a7ad0"/><rect x="0.8" y="10.5" width="16.5" height="1.2" fill="#444"/><circle cx="4.2" cy="12.3" r="1.7" fill="#1a1a1a"/><circle cx="4.2" cy="12.3" r=".7" fill="#aaa"/><circle cx="14" cy="12.3" r="1.7" fill="#1a1a1a"/><circle cx="14" cy="12.3" r=".7" fill="#aaa"/></svg>
<div class="b" style="left:452px;top:715px;width:92px;height:25px;background:#303030;border-radius:2px 2px 0 0;"></div>
<div class="u" style="left:487px;top:720px;color:#e6e6e6;font-size:11px;transform:scaleX(1.0266);transform-origin:0 50%;">Watch 1</div>
<div class="b" style="left:546px;top:715px;width:81px;height:25px;background:#303030;border-radius:2px 2px 0 0;"></div>
<div class="u" style="left:581px;top:720px;color:#e6e6e6;font-size:11px;transform:scaleX(0.9435);transform-origin:0 50%;">Locals</div>
<div class="b" style="left:629px;top:715px;width:81px;height:25px;background:#303030;border-radius:2px 2px 0 0;"></div>
<div class="u" style="left:664px;top:720px;color:#e6e6e6;font-size:11px;transform:scaleX(1.0442);transform-origin:0 50%;">Struct</div>
<svg class="b" style="left:461px;top:719px;" width="17" height="16" viewBox="0 0 17 16"><path d="M2 5.5 L3.2 1.2 L6.3 3.2 Q8.2 2.6 10.2 3.2 L13.3 1.2 L14.5 5.5 Q15.6 8 14.6 10.6 Q12.8 14.6 8.2 14.6 Q3.7 14.6 1.9 10.6 Q.9 8 2 5.5Z" fill="#e89a3c" stroke="#a8601a" stroke-width=".5"/><path d="M3.4 2.6 L3.2 5 L5.2 3.7Z M13.1 2.6 L13.3 5 L11.3 3.7Z" fill="#f6d0a0"/><ellipse cx="8.2" cy="11" rx="3.6" ry="2.9" fill="#fbeedd"/><circle cx="5.6" cy="7.6" r="1" fill="#2a1a10"/><circle cx="10.9" cy="7.6" r="1" fill="#2a1a10"/><ellipse cx="8.2" cy="9.8" rx="1.1" ry=".8" fill="#3a1a10"/><path d="M7 11.6 Q8.2 13.6 9.4 11.6Z" fill="#c8384a"/></svg>
<div class="b" style="left:555px;top:720px;font:13px 'Liberation Serif',serif;color:#161616;line-height:16px;white-space:pre;letter-spacing:-.5px">[<span style="color:#8a1a1a;font-style:italic;font-weight:bold">x</span>=]</div>
<svg class="b" style="left:636px;top:718px;" width="20" height="16" viewBox="0 0 20 16"><path d="M7.5 5.4 H12 M12 5.4 V12.5 H14" fill="none" stroke="#3a3a3a" stroke-width="1"/><circle cx="5.5" cy="5.4" r="2.1" fill="#5a78f0"/><circle cx="5" cy="4.9" r=".8" fill="#a8b8ff"/><circle cx="15.8" cy="5.4" r="1.5" fill="#f0f0f0"/><circle cx="15.8" cy="12.5" r="1.5" fill="#f0f0f0"/></svg>
<div class="b" style="left:3px;top:743px;width:120px;height:15px;background:#414141;border-right:2px solid #6a6a6a;border-bottom:2px solid #6a6a6a;box-sizing:border-box;"></div>
<div class="m" style="left:7px;top:745.5px;line-height:11px;height:11px;color:#e6e6e6;">Address</div>
<div class="b" style="left:123px;top:743px;width:337px;height:15px;background:#414141;border-right:2px solid #6a6a6a;border-bottom:2px solid #6a6a6a;box-sizing:border-box;"></div>
<div class="m" style="left:127px;top:745.5px;line-height:11px;height:11px;color:#e6e6e6;">Hex</div>
<div class="b" style="left:460px;top:743px;width:120px;height:15px;background:#414141;border-right:2px solid #6a6a6a;border-bottom:2px solid #6a6a6a;box-sizing:border-box;"></div>
<div class="m" style="left:464px;top:745.5px;line-height:11px;height:11px;color:#e6e6e6;">ASCII</div>
<div class="b" style="left:580px;top:743px;width:562px;height:15px;background:#414141;border-right:2px solid #6a6a6a;border-bottom:2px solid #6a6a6a;box-sizing:border-box;"></div>
<div class="b" style="left:122px;top:757px;width:1px;height:219px;background:#6a6a6a;"></div>
<div class="b" style="left:459px;top:757px;width:1px;height:219px;background:#6a6a6a;"></div>
<div class="b" style="left:579px;top:757px;width:1px;height:219px;background:#6a6a6a;"></div>
<div class="b" style="left:1141px;top:757px;width:1px;height:219px;background:#6a6a6a;"></div>
<div class="b" style="left:207px;top:758px;width:1px;height:219px;background:#6a6a6a;"></div>
<div class="b" style="left:291px;top:758px;width:1px;height:219px;background:#6a6a6a;"></div>
<div class="b" style="left:375px;top:758px;width:1px;height:219px;background:#6a6a6a;"></div>
<div class="b" style="left:123px;top:758px;width:21px;height:11px;background:#3c3c3c;"></div>
<div class="b" style="left:460px;top:758px;width:11px;height:11px;background:#3c3c3c;"></div>
<div class="m" style="left:7px;top:758.5px;line-height:11px;height:11px;color:#a8a8a8;">00007FFB8BA60000</div>
<div class="m" style="left:128px;top:758.5px;line-height:11px;height:11px;color:#e6e6e6;">4D 5A 90 00 03 00 00 00 04 00 00 00 FF FF 00 00</div>
<div class="m" style="left:464px;top:758.5px;line-height:11px;height:11px;color:#e6e6e6;">MZ..........ÿÿ..</div>
<div class="m" style="left:7px;top:769.5px;line-height:11px;height:11px;color:#a8a8a8;">00007FFB8BA60010</div>
<div class="m" style="left:128px;top:769.5px;line-height:11px;height:11px;color:#e6e6e6;">B8 00 00 00 00 00 00 00 40 00 00 00 00 00 00 00</div>
<div class="m" style="left:464px;top:769.5px;line-height:11px;height:11px;color:#e6e6e6;">¸.......@.......</div>
<div class="m" style="left:7px;top:780.5px;line-height:11px;height:11px;color:#a8a8a8;">00007FFB8BA60020</div>
<div class="m" style="left:128px;top:780.5px;line-height:11px;height:11px;color:#e6e6e6;">00 00 00 00 00 00 00 00 00 00 00 00 00 00 00 00</div>
<div class="m" style="left:464px;top:780.5px;line-height:11px;height:11px;color:#e6e6e6;">................</div>
<div class="m" style="left:7px;top:791.5px;line-height:11px;height:11px;color:#a8a8a8;">00007FFB8BA60030</div>
<div class="m" style="left:128px;top:791.5px;line-height:11px;height:11px;color:#e6e6e6;">00 00 00 00 00 00 00 00 00 00 00 00 F0 00 00 00</div>
<div class="m" style="left:464px;top:791.5px;line-height:11px;height:11px;color:#e6e6e6;">............ð...</div>
<div class="m" style="left:7px;top:802.5px;line-height:11px;height:11px;color:#a8a8a8;">00007FFB8BA60040</div>
<div class="m" style="left:128px;top:802.5px;line-height:11px;height:11px;color:#e6e6e6;">0E 1F BA 0E 00 B4 09 CD 21 B8 01 4C CD 21 54 68</div>
<div class="m" style="left:464px;top:802.5px;line-height:11px;height:11px;color:#e6e6e6;">..º..´.Í!¸.LÍ!Th</div>
<div class="m" style="left:7px;top:813.5px;line-height:11px;height:11px;color:#a8a8a8;">00007FFB8BA60050</div>
<div class="m" style="left:128px;top:813.5px;line-height:11px;height:11px;color:#e6e6e6;">69 73 20 70 72 6F 67 72 61 6D 20 63 61 6E 6E 6F</div>
<div class="m" style="left:464px;top:813.5px;line-height:11px;height:11px;color:#e6e6e6;">is program canno</div>
<div class="m" style="left:7px;top:824.5px;line-height:11px;height:11px;color:#a8a8a8;">00007FFB8BA60060</div>
<div class="m" style="left:128px;top:824.5px;line-height:11px;height:11px;color:#e6e6e6;">74 20 62 65 20 72 75 6E 20 69 6E 20 44 4F 53 20</div>
<div class="m" style="left:464px;top:824.5px;line-height:11px;height:11px;color:#e6e6e6;">t be run in DOS </div>
<div class="m" style="left:7px;top:835.5px;line-height:11px;height:11px;color:#a8a8a8;">00007FFB8BA60070</div>
<div class="m" style="left:128px;top:835.5px;line-height:11px;height:11px;color:#e6e6e6;">6D 6F 64 65 2E 0D 0D 0A 24 00 00 00 00 00 00 00</div>
<div class="m" style="left:464px;top:835.5px;line-height:11px;height:11px;color:#e6e6e6;">mode....$.......</div>
<div class="m" style="left:7px;top:846.5px;line-height:11px;height:11px;color:#a8a8a8;">00007FFB8BA60080</div>
<div class="m" style="left:128px;top:846.5px;line-height:11px;height:11px;color:#e6e6e6;">8F 02 DC 92 CB 63 B2 C1 CB 63 B2 C1 CB 63 B2 C1</div>
<div class="m" style="left:464px;top:846.5px;line-height:11px;height:11px;color:#e6e6e6;">..Ü.Ëc²ÁËc²ÁËc²Á</div>
<div class="m" style="left:7px;top:857.5px;line-height:11px;height:11px;color:#a8a8a8;">00007FFB8BA60090</div>
<div class="m" style="left:128px;top:857.5px;line-height:11px;height:11px;color:#e6e6e6;">C2 1B 21 C1 C9 63 B2 C1 B2 E2 B3 C0 C8 63 B2 C1</div>
<div class="m" style="left:464px;top:857.5px;line-height:11px;height:11px;color:#e6e6e6;">Â.!ÁÉc²Á²â³ÀÈc²Á</div>
<div class="m" style="left:7px;top:868.5px;line-height:11px;height:11px;color:#a8a8a8;">00007FFB8BA600A0</div>
<div class="m" style="left:128px;top:868.5px;line-height:11px;height:11px;color:#e6e6e6;">CB 63 B3 C1 CD 63 B2 C1 B2 E2 B6 C0 CF 63 B2 C1</div>
<div class="m" style="left:464px;top:868.5px;line-height:11px;height:11px;color:#e6e6e6;">Ëc³ÁÍc²Á²â¶ÀÏc²Á</div>
<div class="m" style="left:7px;top:879.5px;line-height:11px;height:11px;color:#a8a8a8;">00007FFB8BA600B0</div>
<div class="m" style="left:128px;top:879.5px;line-height:11px;height:11px;color:#e6e6e6;">B2 E2 B2 C0 CA 63 B2 C1 B2 E2 B1 C0 CF 63 B2 C1</div>
<div class="m" style="left:464px;top:879.5px;line-height:11px;height:11px;color:#e6e6e6;">²â²ÀÊc²Á²â±ÀÏc²Á</div>
<div class="m" style="left:7px;top:890.5px;line-height:11px;height:11px;color:#a8a8a8;">00007FFB8BA600C0</div>
<div class="m" style="left:128px;top:890.5px;line-height:11px;height:11px;color:#e6e6e6;">B2 E2 BA C0 C8 63 B2 C1 B2 E2 4D C1 CA 63 B2 C1</div>
<div class="m" style="left:464px;top:890.5px;line-height:11px;height:11px;color:#e6e6e6;">²âºÀÈc²Á²âMÁÊc²Á</div>
<div class="m" style="left:7px;top:901.5px;line-height:11px;height:11px;color:#a8a8a8;">00007FFB8BA600D0</div>
<div class="m" style="left:128px;top:901.5px;line-height:11px;height:11px;color:#e6e6e6;">B2 E2 B0 C0 CA 63 B2 C1 52 69 63 68 CB 63 B2 C1</div>
<div class="m" style="left:464px;top:901.5px;line-height:11px;height:11px;color:#e6e6e6;">²â°ÀÊc²ÁRichËc²Á</div>
<div class="m" style="left:7px;top:912.5px;line-height:11px;height:11px;color:#a8a8a8;">00007FFB8BA600E0</div>
<div class="m" style="left:128px;top:912.5px;line-height:11px;height:11px;color:#e6e6e6;">00 00 00 00 00 00 00 00 00 00 00 00 00 00 00 00</div>
<div class="m" style="left:464px;top:912.5px;line-height:11px;height:11px;color:#e6e6e6;">................</div>
<div class="m" style="left:7px;top:923.5px;line-height:11px;height:11px;color:#a8a8a8;">00007FFB8BA600F0</div>
<div class="m" style="left:128px;top:923.5px;line-height:11px;height:11px;color:#e6e6e6;">50 45 00 00 64 86 06 00 E4 19 05 E8 00 00 00 00</div>
<div class="m" style="left:464px;top:923.5px;line-height:11px;height:11px;color:#e6e6e6;">PE..d...ä..è....</div>
<div class="m" style="left:7px;top:934.5px;line-height:11px;height:11px;color:#a8a8a8;">00007FFB8BA60100</div>
<div class="m" style="left:128px;top:934.5px;line-height:11px;height:11px;color:#e6e6e6;">00 00 00 00 F0 00 22 20 0B 02 0E 26 00 C0 00 00</div>
<div class="m" style="left:464px;top:934.5px;line-height:11px;height:11px;color:#e6e6e6;">....ð." ...&amp;.À..</div>
<div class="m" style="left:7px;top:945.5px;line-height:11px;height:11px;color:#a8a8a8;">00007FFB8BA60110</div>
<div class="m" style="left:128px;top:945.5px;line-height:11px;height:11px;color:#e6e6e6;">00 A0 01 00 00 00 00 00 00 00 00 00 00 10 00 00</div>
<div class="m" style="left:464px;top:945.5px;line-height:11px;height:11px;color:#e6e6e6;">. ..............</div>
<div class="m" style="left:7px;top:956.5px;line-height:11px;height:11px;color:#a8a8a8;">00007FFB8BA60120</div>
<div class="m" style="left:128px;top:956.5px;line-height:11px;height:11px;color:#e6e6e6;">00 00 A6 8B FB 7F 00 00 00 10 00 00 00 10 00 00</div>
<div class="m" style="left:464px;top:956.5px;line-height:11px;height:11px;color:#e6e6e6;">..¦.û...........</div>
<div class="m" style="left:7px;top:967.5px;line-height:11px;height:11px;color:#a8a8a8;height:8px;overflow:hidden;">00007FFB8BA60130</div>
<div class="m" style="left:128px;top:967.5px;line-height:11px;height:11px;color:#e6e6e6;height:8px;overflow:hidden;">0A 00 00 00 0A 00 00 00 0A 00 00 00 00 00 00 00</div>
<div class="m" style="left:464px;top:967.5px;line-height:11px;height:11px;color:#e6e6e6;height:8px;overflow:hidden;">................</div>
<div class="b" style="left:125px;top:965.0px;width:169px;height:1px;background:#8a8a8a;"></div>
<div class="b" style="left:125px;top:965.0px;width:20px;height:1.5px;background:#d070f0;"></div>
<svg class="b" style="left:1145.0px;top:745px" width="12" height="12" viewBox="-6 -6 12 12"><path d="M-4.2 3.9 L0 -3.9 L4.2 3.9Z" fill="#9a9a9a"/></svg>
<svg class="b" style="left:1145.0px;top:962px" width="12" height="12" viewBox="-6 -6 12 12"><path d="M-4.2 -3.9 L0 3.9 L4.2 -3.9Z" fill="#9a9a9a"/></svg>
<div class="b" style="left:1146px;top:759px;width:10px;height:201px;background:#424242;border-radius:4px;"></div>
<div class="b" style="left:1146px;top:759px;width:10px;height:24px;background:#727272;border-radius:4px;"></div>
<div class="b" style="left:1162px;top:713px;width:1px;height:268px;background:#555;"></div>
<div class="b" style="left:1163px;top:714px;width:1px;height:266px;background:#000;"></div>
<div class="b" style="left:1163px;top:714px;width:757px;height:1px;background:#000;"></div>
<div class="b" style="left:1164px;top:715px;width:736px;height:11px;background:#414141;"></div>
<div class="b" style="left:1283px;top:715px;width:1px;height:243px;background:#6a6a6a;"></div>
<div class="b" style="left:1405px;top:715px;width:1px;height:243px;background:#6a6a6a;"></div>
<div class="m" style="left:1168px;top:715.5px;line-height:11px;height:11px;color:#9cf05a;">000000869D6FFA10</div>
<div class="m" style="left:1291px;top:715.5px;line-height:11px;height:11px;color:#e6e6e6;">0000026C00000000</div>
<div class="m" style="left:1168px;top:726.5px;line-height:11px;height:11px;color:#a8a8a8;">000000869D6FFA18</div>
<div class="m" style="left:1288px;top:726.5px;line-height:11px;height:11px;color:#e6e6e6;">0000000000000000</div>
<div class="m" style="left:1168px;top:737.5px;line-height:11px;height:11px;color:#a8a8a8;">000000869D6FFA20</div>
<div class="m" style="left:1288px;top:737.5px;line-height:11px;height:11px;color:#e6e6e6;">0000026C529D699C</div>
<div class="m" style="left:1168px;top:748.5px;line-height:11px;height:11px;color:#a8a8a8;">000000869D6FFA28</div>
<div class="m" style="left:1288px;top:748.5px;line-height:11px;height:11px;color:#e6e6e6;">000000000000006E</div>
<div class="m" style="left:1168px;top:759.5px;line-height:11px;height:11px;color:#a8a8a8;">000000869D6FFA30</div>
<div class="m" style="left:1288px;top:759.5px;line-height:11px;height:11px;color:#e6e6e6;">0000000000000400</div>
<div class="m" style="left:1168px;top:770.5px;line-height:11px;height:11px;color:#a8a8a8;">000000869D6FFA38</div>
<div class="m" style="left:1288px;top:770.5px;line-height:11px;height:11px;color:#e6e6e6;">000000869D6FFB48</div>
<div class="m" style="left:1168px;top:781.5px;line-height:11px;height:11px;color:#a8a8a8;">000000869D6FFA40</div>
<div class="m" style="left:1288px;top:781.5px;line-height:11px;height:11px;color:#e6e6e6;">0000000000000000</div>
<div class="m" style="left:1168px;top:792.5px;line-height:11px;height:11px;color:#a8a8a8;">000000869D6FFA48</div>
<div class="m" style="left:1288px;top:792.5px;line-height:11px;height:11px;color:#e6e6e6;">0000000000000000</div>
<div class="m" style="left:1168px;top:803.5px;line-height:11px;height:11px;color:#a8a8a8;">000000869D6FFA50</div>
<div class="m" style="left:1288px;top:803.5px;line-height:11px;height:11px;color:#e6e6e6;">0000000000000005</div>
<div class="m" style="left:1168px;top:814.5px;line-height:11px;height:11px;color:#a8a8a8;">000000869D6FFA58</div>
<div class="m" style="left:1288px;top:814.5px;line-height:11px;height:11px;color:#e6e6e6;">0000026C529D0000</div>
<div class="m" style="left:1168px;top:825.5px;line-height:11px;height:11px;color:#a8a8a8;">000000869D6FFA60</div>
<div class="m" style="left:1288px;top:825.5px;line-height:11px;height:11px;color:#e6e6e6;">0000000000000005</div>
<div class="m" style="left:1168px;top:836.5px;line-height:11px;height:11px;color:#a8a8a8;">000000869D6FFA68</div>
<div class="m" style="left:1288px;top:836.5px;line-height:11px;height:11px;color:#e6e6e6;">000000068E060400</div>
<div class="m" style="left:1168px;top:847.5px;line-height:11px;height:11px;color:#a8a8a8;">000000869D6FFA70</div>
<div class="m" style="left:1288px;top:847.5px;line-height:11px;height:11px;color:#e6e6e6;">000000000000027F</div>
<div class="m" style="left:1168px;top:858.5px;line-height:11px;height:11px;color:#a8a8a8;">000000869D6FFA78</div>
<div class="m" style="left:1288px;top:858.5px;line-height:11px;height:11px;color:#e6e6e6;">0000000000000048</div>
<div class="m" style="left:1168px;top:869.5px;line-height:11px;height:11px;color:#a8a8a8;">000000869D6FFA80</div>
<div class="m" style="left:1288px;top:869.5px;line-height:11px;height:11px;color:#e6e6e6;">0000000180000118</div>
<div class="m" style="left:1168px;top:880.5px;line-height:11px;height:11px;color:#a8a8a8;">000000869D6FFA88</div>
<div class="m" style="left:1288px;top:880.5px;line-height:11px;height:11px;color:#e6e6e6;">0000FFFF00001F80</div>
<div class="m" style="left:1168px;top:891.5px;line-height:11px;height:11px;color:#a8a8a8;">000000869D6FFA90</div>
<div class="m" style="left:1288px;top:891.5px;line-height:11px;height:11px;color:#e6e6e6;">0000000180017F14</div>
<div class="m" style="left:1168px;top:902.5px;line-height:11px;height:11px;color:#a8a8a8;">000000869D6FFA98</div>
<div class="m" style="left:1288px;top:902.5px;line-height:11px;height:11px;color:#e6e6e6;">0000000000000009</div>
<div class="m" style="left:1168px;top:913.5px;line-height:11px;height:11px;color:#a8a8a8;">000000869D6FFAA0</div>
<div class="m" style="left:1288px;top:913.5px;line-height:11px;height:11px;color:#e6e6e6;">0000000000000000</div>
<div class="m" style="left:1168px;top:924.5px;line-height:11px;height:11px;color:#a8a8a8;">000000869D6FFAA8</div>
<div class="m" style="left:1288px;top:924.5px;line-height:11px;height:11px;color:#e6e6e6;">0000000000000000</div>
<div class="m" style="left:1168px;top:935.5px;line-height:11px;height:11px;color:#a8a8a8;">000000869D6FFAB0</div>
<div class="m" style="left:1288px;top:935.5px;line-height:11px;height:11px;color:#e6e6e6;">0000000000000000</div>
<div class="m" style="left:1168px;top:946.5px;line-height:11px;height:11px;color:#a8a8a8;">000000869D6FFAB8</div>
<div class="m" style="left:1288px;top:946.5px;line-height:11px;height:11px;color:#e6e6e6;">0000000180000100</div>
<div class="b" style="left:1285px;top:716px;width:5px;height:6px;background:#ff7a72;"></div>
<div class="b" style="left:1287.5px;top:718px;width:2.5px;height:2.5px;background:#414141;"></div>
<div class="m" style="left:1410px;top:737.5px;line-height:11px;height:11px;color:#e6e6e6;">L"[SHELLCODE]             Suicide\n"</div>
<svg class="b" style="left:1903.0px;top:717px" width="12" height="12" viewBox="-6 -6 12 12"><path d="M-4.2 3.9 L0 -3.9 L4.2 3.9Z" fill="#9a9a9a"/></svg>
<svg class="b" style="left:1903.0px;top:945px" width="12" height="12" viewBox="-6 -6 12 12"><path d="M-4.2 -3.9 L0 3.9 L4.2 -3.9Z" fill="#9a9a9a"/></svg>
<div class="b" style="left:1904px;top:731px;width:10px;height:212px;background:#424242;border-radius:4px;"></div>
<div class="b" style="left:1904px;top:909px;width:10px;height:24px;background:#727272;border-radius:4px;"></div>
<svg class="b" style="left:1166px;top:961.0px" width="12" height="12" viewBox="-6 -6 12 12"><path d="M3.9 -4.2 L-3.9 0 L3.9 4.2Z" fill="#9a9a9a"/></svg>
<svg class="b" style="left:1886px;top:961.0px" width="12" height="12" viewBox="-6 -6 12 12"><path d="M-3.9 -4.2 L3.9 0 L-3.9 4.2Z" fill="#9a9a9a"/></svg>
<div class="b" style="left:1180px;top:962px;width:704px;height:10px;background:#424242;border-radius:4px;"></div>
<div class="b" style="left:1180px;top:962px;width:212px;height:10px;background:#727272;border-radius:4px;"></div>
<div class="u" style="left:1px;top:986.5px;color:#f0f0f0;font-size:11px;transform:scaleX(0.9294);transform-origin:0 50%;">Command:</div>
<div class="b" style="left:56px;top:985px;width:1757px;height:18px;background:#333333;border-radius:2px;"></div>
<div class="b" style="left:59px;top:987px;font:11.664px 'Liberation Mono',monospace;color:#747474;line-height:14px;white-space:pre;">Commands are comma separated (like assembly instructions): mov eax, ebx</div>
<div class="b" style="left:1815px;top:980px;width:103px;height:28px;background:#212121;border:1px solid #3e3e3e;border-radius:3px;box-sizing:border-box"></div>
<div class="u" style="left:1820.5px;top:986.5px;color:#e6e6e6;font-size:11px;transform:scaleX(1.0186);transform-origin:0 50%;">Default</div>
<svg class="b" style="left:1904.5px;top:988px" width="12" height="12" viewBox="-6 -6 12 12"><path d="M-3.8 -2.1 L0 2.1 L3.8 -2.1Z" fill="#a0a0a0"/></svg>
<div class="u" style="left:15.5px;top:1012.5px;color:#a5a535;font-size:11px;transform:scaleX(0.9381);transform-origin:0 50%;">Paused</div>
<div class="u" style="left:72px;top:1012.5px;color:#f0f0f0;font-size:11px;transform:scaleX(0.9933);transform-origin:0 50%;">Thread 5176 exit</div>
<div class="u" style="left:1743px;top:1013.5px;color:#f0f0f0;font-size:11px;transform:scaleX(0.9942);transform-origin:0 50%;">Time Wasted Debugging: 0:00:27:11</div>
<div class="b" style="left:0px;top:1032px;width:1920px;height:1px;background:#4a4a4a;"></div>
<div class="b" style="left:0px;top:1033px;width:1920px;height:1px;background:#1a1a1a;"></div>
</body></html>
